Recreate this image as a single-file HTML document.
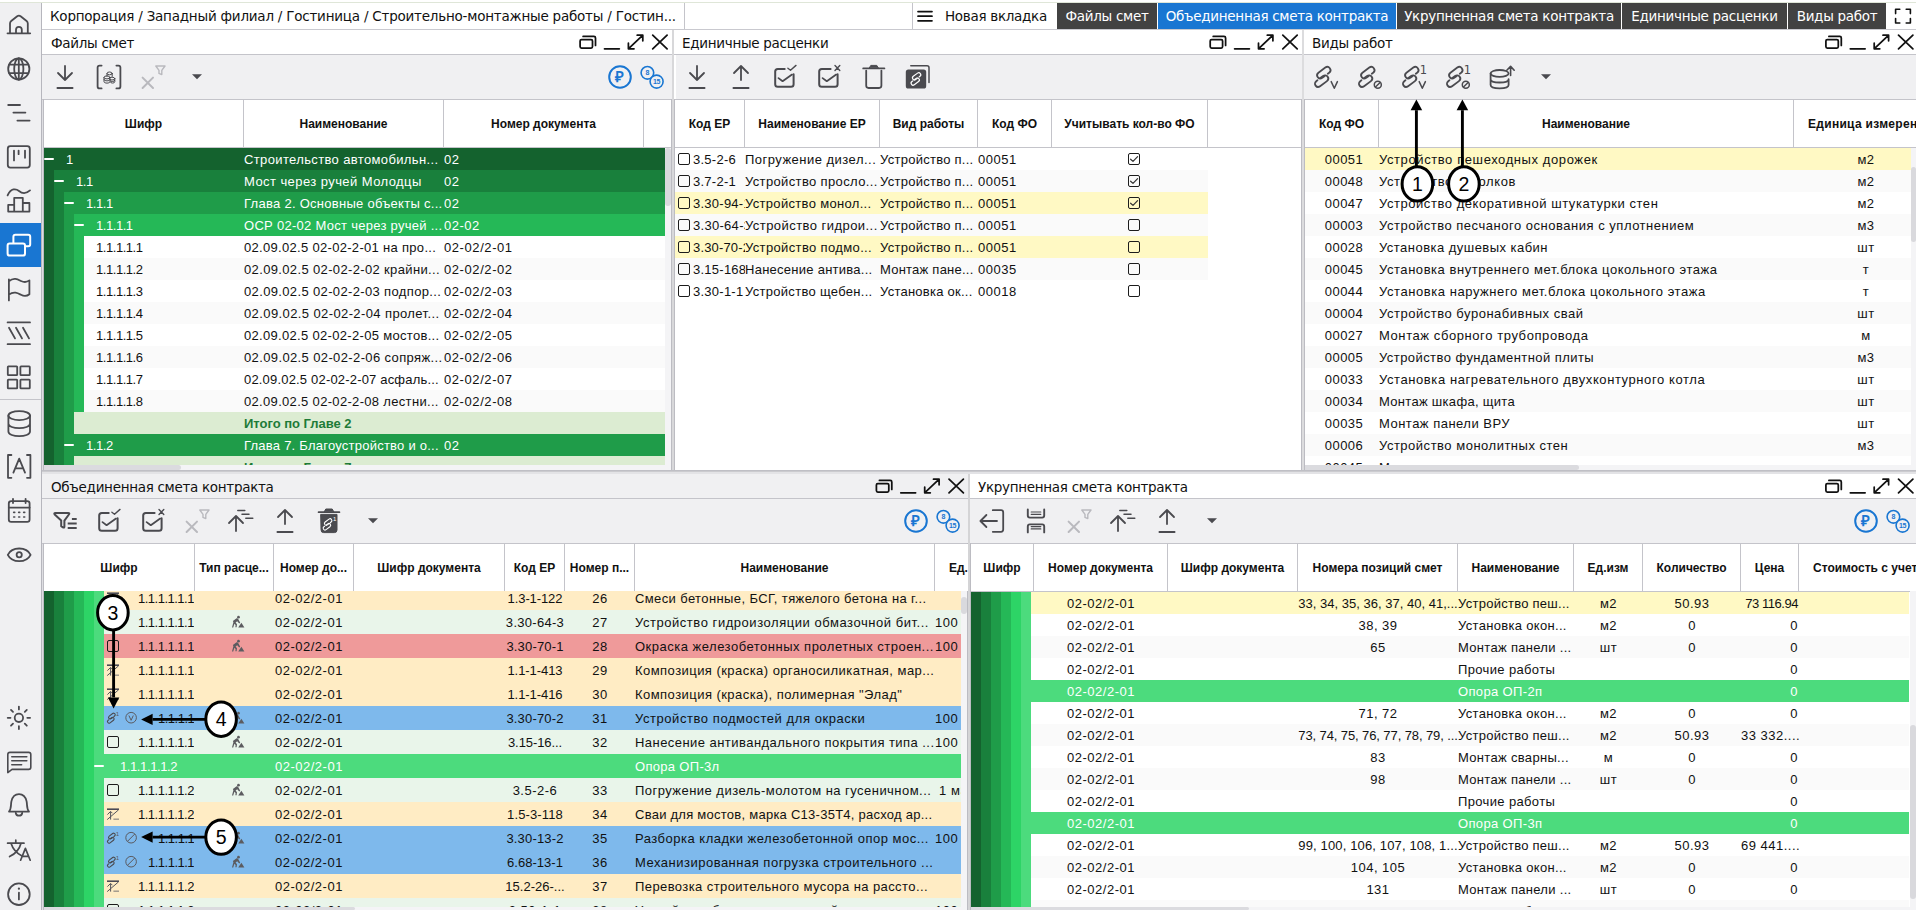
<!DOCTYPE html><html lang="ru"><head><meta charset="utf-8"><title>Объединенная смета контракта</title><style>
*{box-sizing:border-box;margin:0;padding:0}
html,body{width:1916px;height:910px;overflow:hidden;background:#f0f0f2}
body{position:relative;font-family:"Liberation Sans",sans-serif;font-size:14px;color:#111}
.a{position:absolute}
.dj{position:absolute;font-family:"DejaVu Sans","Liberation Sans",sans-serif;font-size:13.5px;letter-spacing:-0.3px;white-space:nowrap;color:#111;line-height:16px}
.th{position:absolute;border-right:1px solid #c4c4ca;font-weight:bold;font-size:12px;text-align:center;white-space:nowrap;overflow:hidden;text-overflow:ellipsis;color:#111;background:#fff}
.rows{position:absolute;overflow:hidden}
.row{position:absolute;left:0}
.c{position:absolute;top:0;height:100%;white-space:nowrap;overflow:hidden;text-overflow:clip;font-size:13px;letter-spacing:0.5px;color:#111}
.clip{text-overflow:clip}
.ctr{text-align:center}
.rgt{text-align:right}
.wt{color:#fff}
.cb{position:absolute;width:12px;height:12px;border:1.5px solid #1c1c1c;border-radius:2px}
svg{position:absolute;left:0;top:0;overflow:visible;pointer-events:none}
.i{fill:none;stroke:#4a4a4f;stroke-width:1.8;stroke-linecap:round;stroke-linejoin:round}
.k{fill:none;stroke:#111;stroke-width:1.75;stroke-linecap:round;stroke-linejoin:round}
svg text{font-family:"Liberation Sans",sans-serif}
</style></head><body><div class="a" style="left:0px;top:3px;width:42px;height:907px;background:#f0f0f2;border-right:1px solid #b6b6bd"></div>
<div class="a" style="left:0px;top:223px;width:41px;height:44px;background:#1976d2"></div>
<div class="a" style="left:0px;top:399px;width:41px;height:1px;background:#c4c4ca"></div>
<div class="a" style="left:0px;top:0px;width:1916px;height:2px;background:#fff"></div>
<div class="a" style="left:0px;top:2px;width:1916px;height:1px;background:#dfe6d8"></div>
<div class="a" style="left:42px;top:3px;width:1874px;height:27px;background:#fff;border-bottom:1px solid #c9c9cf"></div>
<div class="a" style="left:684px;top:3px;width:1px;height:26px;background:#c4c4ca"></div>
<div class="a" style="left:912px;top:3px;width:1px;height:26px;background:#c4c4ca"></div>
<div class="dj" style="left:50px;top:8px;letter-spacing:-0.225px">Корпорация / Западный филиал / Гостиница / Строительно-монтажные работы / Гостин...</div>
<div class="dj" style="left:945px;top:8px">Новая вкладка</div>
<div class="dj" style="left:1057px;top:3px;width:100px;height:26px;line-height:26px;background:#424242;color:#fff;text-align:center">Файлы смет</div>
<div class="dj" style="left:1158px;top:3px;width:238px;height:26px;line-height:26px;background:#1976d2;color:#fff;text-align:center">Объединенная смета контракта</div>
<div class="dj" style="left:1397px;top:3px;width:224px;height:26px;line-height:26px;background:#424242;color:#fff;text-align:center">Укрупненная смета контракта</div>
<div class="dj" style="left:1622px;top:3px;width:165px;height:26px;line-height:26px;background:#424242;color:#fff;text-align:center">Единичные расценки</div>
<div class="dj" style="left:1788px;top:3px;width:98px;height:26px;line-height:26px;background:#424242;color:#fff;text-align:center">Виды работ</div>
<div class="a" style="left:42px;top:470px;width:1874px;height:1px;background:#bfbfc5"></div>
<div class="a" style="left:42px;top:471px;width:1874px;height:1px;background:#cbcbcf"></div>
<div class="a" style="left:42px;top:472px;width:1874px;height:2px;background:#e3e3e6"></div>
<div class="a" style="left:42px;top:30px;width:630px;height:440px;background:#fff"></div>
<div class="a" style="left:42px;top:54px;width:630px;height:1px;background:#c4c4ca"></div>
<div class="dj" style="left:51px;top:35px">Файлы смет</div>
<div class="a" style="left:42px;top:55px;width:630px;height:44px;background:#f0f0f2"></div>
<div class="a" style="left:42px;top:99px;width:630px;height:1px;background:#c4c4ca"></div>
<div class="a" style="left:42px;top:147px;width:630px;height:1px;background:#c4c4ca"></div>
<div class="a" style="left:43px;top:99px;width:1px;height:371px;background:#bcbcc2"></div>
<div class="a" style="left:42px;top:100px;width:1px;height:370px;background:#dedee2"></div>
<div class="a" style="left:671px;top:99px;width:1px;height:371px;background:#bcbcc2"></div>
<div class="a" style="left:674px;top:30px;width:628px;height:440px;background:#fff"></div>
<div class="a" style="left:674px;top:54px;width:628px;height:1px;background:#c4c4ca"></div>
<div class="dj" style="left:682px;top:35px">Единичные расценки</div>
<div class="a" style="left:676px;top:55px;width:626px;height:44px;background:#f0f0f2"></div>
<div class="a" style="left:674px;top:99px;width:628px;height:1px;background:#c4c4ca"></div>
<div class="a" style="left:674px;top:147px;width:628px;height:1px;background:#c4c4ca"></div>
<div class="a" style="left:674px;top:99px;width:1px;height:371px;background:#bcbcc2"></div>
<div class="a" style="left:1301px;top:99px;width:1px;height:371px;background:#bcbcc2"></div>
<div class="a" style="left:1304px;top:30px;width:612px;height:440px;background:#fff"></div>
<div class="a" style="left:1304px;top:54px;width:612px;height:1px;background:#c4c4ca"></div>
<div class="dj" style="left:1312px;top:35px">Виды работ</div>
<div class="a" style="left:1304px;top:55px;width:612px;height:44px;background:#f0f0f2"></div>
<div class="a" style="left:1304px;top:99px;width:612px;height:1px;background:#c4c4ca"></div>
<div class="a" style="left:1304px;top:147px;width:612px;height:1px;background:#c4c4ca"></div>
<div class="a" style="left:1304px;top:99px;width:1px;height:371px;background:#bcbcc2"></div>
<div class="a" style="left:42px;top:474px;width:926px;height:436px;background:#fff"></div>
<div class="a" style="left:42px;top:474px;width:926px;height:24px;background:#f0f0f2"></div>
<div class="a" style="left:42px;top:498px;width:926px;height:1px;background:#c4c4ca"></div>
<div class="dj" style="left:51px;top:479px">Объединенная смета контракта</div>
<div class="a" style="left:42px;top:499px;width:926px;height:44px;background:#f0f0f2"></div>
<div class="a" style="left:42px;top:543px;width:926px;height:1px;background:#c4c4ca"></div>
<div class="a" style="left:42px;top:591px;width:926px;height:1px;background:#c4c4ca"></div>
<div class="a" style="left:43px;top:543px;width:1px;height:367px;background:#bcbcc2"></div>
<div class="a" style="left:42px;top:544px;width:1px;height:366px;background:#dedee2"></div>
<div class="a" style="left:967px;top:543px;width:1px;height:367px;background:#bcbcc2"></div>
<div class="a" style="left:970px;top:474px;width:946px;height:436px;background:#fff"></div>
<div class="a" style="left:970px;top:498px;width:946px;height:1px;background:#c4c4ca"></div>
<div class="dj" style="left:978px;top:479px">Укрупненная смета контракта</div>
<div class="a" style="left:970px;top:499px;width:946px;height:44px;background:#f0f0f2"></div>
<div class="a" style="left:970px;top:543px;width:946px;height:1px;background:#c4c4ca"></div>
<div class="a" style="left:970px;top:591px;width:946px;height:1px;background:#c4c4ca"></div>
<div class="a" style="left:970px;top:543px;width:1px;height:367px;background:#bcbcc2"></div>
<div class="a" style="left:672px;top:30px;width:2px;height:440px;background:#d8d8da"></div>
<div class="a" style="left:1302px;top:30px;width:2px;height:440px;background:#dcdcde"></div>
<div class="a" style="left:968px;top:474px;width:2px;height:436px;background:#d4d4d6"></div>
<div class="th" style="left:44px;top:100px;width:200px;height:47px;line-height:49px;">Шифр</div>
<div class="th" style="left:244px;top:100px;width:200px;height:47px;line-height:49px;">Наименование</div>
<div class="th" style="left:444px;top:100px;width:200px;height:47px;line-height:49px;">Номер документа</div>
<div class="rows" style="left:44px;top:148px;width:621px;height:317px"><div class="row" style="top:0px;width:621px;height:22px;line-height:24px;"><div class="a" style="left:0px;top:0;width:621px;height:22px;background:#14622e"></div><div class="a" style="left:0.3px;top:9.6px;width:10.2px;height:2px;background:#fff;border-radius:1px"></div><div class="c wt clip" style="left:22px;width:178px;letter-spacing:-0.45px;">1</div><div class="c wt" style="left:200px;width:200px;letter-spacing:0.363px;">Строительство автомобильн...</div><div class="c wt" style="left:400px;width:200px;">02</div></div><div class="row" style="top:22px;width:621px;height:22px;line-height:24px;"><div class="a" style="left:0px;top:0;width:10px;height:22px;background:#14622e"></div><div class="a" style="left:10px;top:0;width:611px;height:22px;background:#19803c"></div><div class="a" style="left:10.3px;top:9.6px;width:10.2px;height:2px;background:#fff;border-radius:1px"></div><div class="c wt clip" style="left:32px;width:168px;letter-spacing:-0.45px;">1.1</div><div class="c wt" style="left:200px;width:200px;letter-spacing:0.427px;">Мост через ручей Молодцы</div><div class="c wt" style="left:400px;width:200px;">02</div></div><div class="row" style="top:44px;width:621px;height:22px;line-height:24px;"><div class="a" style="left:0px;top:0;width:10px;height:22px;background:#14622e"></div><div class="a" style="left:10px;top:0;width:10px;height:22px;background:#19803c"></div><div class="a" style="left:20px;top:0;width:601px;height:22px;background:#1f9c49"></div><div class="a" style="left:20.3px;top:9.6px;width:10.2px;height:2px;background:#fff;border-radius:1px"></div><div class="c wt clip" style="left:42px;width:158px;letter-spacing:-0.45px;">1.1.1</div><div class="c wt" style="left:200px;width:200px;letter-spacing:0.275px;">Глава 2. Основные объекты с...</div><div class="c wt" style="left:400px;width:200px;">02</div></div><div class="row" style="top:66px;width:621px;height:22px;line-height:24px;"><div class="a" style="left:0px;top:0;width:10px;height:22px;background:#14622e"></div><div class="a" style="left:10px;top:0;width:10px;height:22px;background:#19803c"></div><div class="a" style="left:20px;top:0;width:10px;height:22px;background:#1f9c49"></div><div class="a" style="left:30px;top:0;width:591px;height:22px;background:#25b857"></div><div class="a" style="left:30.3px;top:9.6px;width:10.2px;height:2px;background:#fff;border-radius:1px"></div><div class="c wt clip" style="left:52px;width:148px;letter-spacing:-0.45px;">1.1.1.1</div><div class="c wt" style="left:200px;width:200px;letter-spacing:0.281px;">ОСР 02-02 Мост через ручей ...</div><div class="c wt" style="left:400px;width:200px;">02-02</div></div><div class="row" style="top:88px;width:621px;height:22px;line-height:24px;"><div class="a" style="left:0px;top:0;width:10px;height:22px;background:#14622e"></div><div class="a" style="left:10px;top:0;width:10px;height:22px;background:#19803c"></div><div class="a" style="left:20px;top:0;width:10px;height:22px;background:#1f9c49"></div><div class="a" style="left:30px;top:0;width:10px;height:22px;background:#25b857"></div><div class="a" style="left:40px;top:0;width:581px;height:22px;background:#fff"></div><div class="c clip" style="left:52px;width:148px;letter-spacing:-0.45px;">1.1.1.1.1</div><div class="c " style="left:200px;width:200px;letter-spacing:0.307px;">02.09.02.5 02-02-2-01 на про...</div><div class="c " style="left:400px;width:200px;letter-spacing:0.579px;">02-02/2-01</div></div><div class="row" style="top:110px;width:621px;height:22px;line-height:24px;"><div class="a" style="left:0px;top:0;width:10px;height:22px;background:#14622e"></div><div class="a" style="left:10px;top:0;width:10px;height:22px;background:#19803c"></div><div class="a" style="left:20px;top:0;width:10px;height:22px;background:#1f9c49"></div><div class="a" style="left:30px;top:0;width:10px;height:22px;background:#25b857"></div><div class="a" style="left:40px;top:0;width:581px;height:22px;background:#fafafa"></div><div class="c clip" style="left:52px;width:148px;letter-spacing:-0.45px;">1.1.1.1.2</div><div class="c " style="left:200px;width:200px;letter-spacing:0.355px;">02.09.02.5 02-02-2-02 крайни...</div><div class="c " style="left:400px;width:200px;letter-spacing:0.579px;">02-02/2-02</div></div><div class="row" style="top:132px;width:621px;height:22px;line-height:24px;"><div class="a" style="left:0px;top:0;width:10px;height:22px;background:#14622e"></div><div class="a" style="left:10px;top:0;width:10px;height:22px;background:#19803c"></div><div class="a" style="left:20px;top:0;width:10px;height:22px;background:#1f9c49"></div><div class="a" style="left:30px;top:0;width:10px;height:22px;background:#25b857"></div><div class="a" style="left:40px;top:0;width:581px;height:22px;background:#fff"></div><div class="c clip" style="left:52px;width:148px;letter-spacing:-0.45px;">1.1.1.1.3</div><div class="c " style="left:200px;width:200px;letter-spacing:0.357px;">02.09.02.5 02-02-2-03 подпор...</div><div class="c " style="left:400px;width:200px;letter-spacing:0.579px;">02-02/2-03</div></div><div class="row" style="top:154px;width:621px;height:22px;line-height:24px;"><div class="a" style="left:0px;top:0;width:10px;height:22px;background:#14622e"></div><div class="a" style="left:10px;top:0;width:10px;height:22px;background:#19803c"></div><div class="a" style="left:20px;top:0;width:10px;height:22px;background:#1f9c49"></div><div class="a" style="left:30px;top:0;width:10px;height:22px;background:#25b857"></div><div class="a" style="left:40px;top:0;width:581px;height:22px;background:#fafafa"></div><div class="c clip" style="left:52px;width:148px;letter-spacing:-0.45px;">1.1.1.1.4</div><div class="c " style="left:200px;width:200px;letter-spacing:0.395px;">02.09.02.5 02-02-2-04 пролет...</div><div class="c " style="left:400px;width:200px;letter-spacing:0.579px;">02-02/2-04</div></div><div class="row" style="top:176px;width:621px;height:22px;line-height:24px;"><div class="a" style="left:0px;top:0;width:10px;height:22px;background:#14622e"></div><div class="a" style="left:10px;top:0;width:10px;height:22px;background:#19803c"></div><div class="a" style="left:20px;top:0;width:10px;height:22px;background:#1f9c49"></div><div class="a" style="left:30px;top:0;width:10px;height:22px;background:#25b857"></div><div class="a" style="left:40px;top:0;width:581px;height:22px;background:#fff"></div><div class="c clip" style="left:52px;width:148px;letter-spacing:-0.45px;">1.1.1.1.5</div><div class="c " style="left:200px;width:200px;letter-spacing:0.314px;">02.09.02.5 02-02-2-05 мостов...</div><div class="c " style="left:400px;width:200px;letter-spacing:0.579px;">02-02/2-05</div></div><div class="row" style="top:198px;width:621px;height:22px;line-height:24px;"><div class="a" style="left:0px;top:0;width:10px;height:22px;background:#14622e"></div><div class="a" style="left:10px;top:0;width:10px;height:22px;background:#19803c"></div><div class="a" style="left:20px;top:0;width:10px;height:22px;background:#1f9c49"></div><div class="a" style="left:30px;top:0;width:10px;height:22px;background:#25b857"></div><div class="a" style="left:40px;top:0;width:581px;height:22px;background:#fafafa"></div><div class="c clip" style="left:52px;width:148px;letter-spacing:-0.45px;">1.1.1.1.6</div><div class="c " style="left:200px;width:200px;letter-spacing:0.377px;">02.09.02.5 02-02-2-06 сопряж...</div><div class="c " style="left:400px;width:200px;letter-spacing:0.579px;">02-02/2-06</div></div><div class="row" style="top:220px;width:621px;height:22px;line-height:24px;"><div class="a" style="left:0px;top:0;width:10px;height:22px;background:#14622e"></div><div class="a" style="left:10px;top:0;width:10px;height:22px;background:#19803c"></div><div class="a" style="left:20px;top:0;width:10px;height:22px;background:#1f9c49"></div><div class="a" style="left:30px;top:0;width:10px;height:22px;background:#25b857"></div><div class="a" style="left:40px;top:0;width:581px;height:22px;background:#fff"></div><div class="c clip" style="left:52px;width:148px;letter-spacing:-0.45px;">1.1.1.1.7</div><div class="c " style="left:200px;width:200px;letter-spacing:0.182px;">02.09.02.5 02-02-2-07 асфаль...</div><div class="c " style="left:400px;width:200px;letter-spacing:0.579px;">02-02/2-07</div></div><div class="row" style="top:242px;width:621px;height:22px;line-height:24px;"><div class="a" style="left:0px;top:0;width:10px;height:22px;background:#14622e"></div><div class="a" style="left:10px;top:0;width:10px;height:22px;background:#19803c"></div><div class="a" style="left:20px;top:0;width:10px;height:22px;background:#1f9c49"></div><div class="a" style="left:30px;top:0;width:10px;height:22px;background:#25b857"></div><div class="a" style="left:40px;top:0;width:581px;height:22px;background:#fafafa"></div><div class="c clip" style="left:52px;width:148px;letter-spacing:-0.45px;">1.1.1.1.8</div><div class="c " style="left:200px;width:200px;letter-spacing:0.321px;">02.09.02.5 02-02-2-08 лестни...</div><div class="c " style="left:400px;width:200px;letter-spacing:0.579px;">02-02/2-08</div></div><div class="row" style="top:264px;width:621px;height:22px;line-height:24px;"><div class="a" style="left:0px;top:0;width:10px;height:22px;background:#14622e"></div><div class="a" style="left:10px;top:0;width:10px;height:22px;background:#19803c"></div><div class="a" style="left:20px;top:0;width:10px;height:22px;background:#1f9c49"></div><div class="a" style="left:30px;top:0;width:591px;height:22px;background:#dcecd2"></div><div class="c " style="left:200px;width:200px;color:#1e7b38;font-weight:bold;letter-spacing:-0.019px;">Итого по Главе 2</div></div><div class="row" style="top:286px;width:621px;height:22px;line-height:24px;"><div class="a" style="left:0px;top:0;width:10px;height:22px;background:#14622e"></div><div class="a" style="left:10px;top:0;width:10px;height:22px;background:#19803c"></div><div class="a" style="left:20px;top:0;width:601px;height:22px;background:#1f9c49"></div><div class="a" style="left:20.3px;top:9.6px;width:10.2px;height:2px;background:#fff;border-radius:1px"></div><div class="c wt clip" style="left:42px;width:158px;letter-spacing:-0.45px;">1.1.2</div><div class="c wt" style="left:200px;width:200px;letter-spacing:0.236px;">Глава 7. Благоустройство и о...</div><div class="c wt" style="left:400px;width:200px;">02</div></div><div class="row" style="top:308px;width:621px;height:22px;line-height:24px;"><div class="a" style="left:0px;top:0;width:10px;height:22px;background:#14622e"></div><div class="a" style="left:10px;top:0;width:10px;height:22px;background:#19803c"></div><div class="a" style="left:20px;top:0;width:10px;height:22px;background:#1f9c49"></div><div class="a" style="left:30px;top:0;width:591px;height:22px;background:#dcecd2"></div><div class="c " style="left:200px;width:200px;color:#1e7b38;font-weight:bold;letter-spacing:-0.019px;">Итого по Главе 7</div></div></div>
<div class="a" style="left:665px;top:148px;width:6px;height:317px;background:#fff"></div>
<div class="a" style="left:665px;top:148px;width:6px;height:317px;background:#f4f4f6"></div>
<div class="a" style="left:665px;top:148px;width:6px;height:58px;background:#d9d9dd;border-radius:3px"></div>
<div class="a" style="left:44px;top:465px;width:627px;height:5px;background:#f4f4f6"></div>
<div class="a" style="left:44px;top:465px;width:137px;height:5px;background:#dbdbdf;border-radius:0 3px 3px 0"></div>
<div class="th" style="left:675px;top:100px;width:70px;height:47px;line-height:49px;">Код ЕР</div>
<div class="th" style="left:745px;top:100px;width:135px;height:47px;line-height:49px;">Наименование ЕР</div>
<div class="th" style="left:880px;top:100px;width:98px;height:47px;line-height:49px;">Вид работы</div>
<div class="th" style="left:978px;top:100px;width:74px;height:47px;line-height:49px;">Код ФО</div>
<div class="th" style="left:1052px;top:100px;width:156px;height:47px;line-height:49px;">Учитывать кол-во ФО</div>
<div class="rows" style="left:675px;top:148px;width:533px;height:154px"><div class="row" style="top:0px;width:533px;height:22px;line-height:24px;background:#fff"><div class="cb" style="left:3px;top:5px"></div><div class="c clip" style="left:18px;width:52px;letter-spacing:0.25px;">3.5-2-6</div><div class="c " style="left:70px;width:135px;letter-spacing:0.478px;">Погружение дизел...</div><div class="c " style="left:205px;width:98px;letter-spacing:0.266px;">Устройство п...</div><div class="c " style="left:303px;width:74px;">00051</div><div class="cb" style="left:453px;top:5px"><svg width="12" height="12" viewBox="0 0 12 12" style="left:-1.4px;top:-1.4px"><path d="M2.6 6.2L5 8.4L9.6 3.6" fill="none" stroke="#333" stroke-width="1.2" stroke-linecap="round" stroke-linejoin="round"/></svg></div></div><div class="row" style="top:22px;width:533px;height:22px;line-height:24px;background:#fafafa"><div class="cb" style="left:3px;top:5px"></div><div class="c clip" style="left:18px;width:52px;letter-spacing:0.25px;">3.7-2-1</div><div class="c " style="left:70px;width:135px;letter-spacing:0.363px;">Устройство просло...</div><div class="c " style="left:205px;width:98px;letter-spacing:0.266px;">Устройство п...</div><div class="c " style="left:303px;width:74px;">00051</div><div class="cb" style="left:453px;top:5px"><svg width="12" height="12" viewBox="0 0 12 12" style="left:-1.4px;top:-1.4px"><path d="M2.6 6.2L5 8.4L9.6 3.6" fill="none" stroke="#333" stroke-width="1.2" stroke-linecap="round" stroke-linejoin="round"/></svg></div></div><div class="row" style="top:44px;width:533px;height:22px;line-height:24px;background:#fff9c4"><div class="cb" style="left:3px;top:5px"></div><div class="c clip" style="left:18px;width:52px;letter-spacing:0.25px;">3.30-94-1</div><div class="c " style="left:70px;width:135px;letter-spacing:0.324px;">Устройство монол...</div><div class="c " style="left:205px;width:98px;letter-spacing:0.266px;">Устройство п...</div><div class="c " style="left:303px;width:74px;">00051</div><div class="cb" style="left:453px;top:5px"><svg width="12" height="12" viewBox="0 0 12 12" style="left:-1.4px;top:-1.4px"><path d="M2.6 6.2L5 8.4L9.6 3.6" fill="none" stroke="#333" stroke-width="1.2" stroke-linecap="round" stroke-linejoin="round"/></svg></div></div><div class="row" style="top:66px;width:533px;height:22px;line-height:24px;background:#fafafa"><div class="cb" style="left:3px;top:5px"></div><div class="c clip" style="left:18px;width:52px;letter-spacing:0.25px;letter-spacing:0.292px;">3.30-64-3</div><div class="c " style="left:70px;width:135px;letter-spacing:0.446px;">Устройство гидрои...</div><div class="c " style="left:205px;width:98px;letter-spacing:0.266px;">Устройство п...</div><div class="c " style="left:303px;width:74px;">00051</div><div class="cb" style="left:453px;top:5px"></div></div><div class="row" style="top:88px;width:533px;height:22px;line-height:24px;background:#fff9c4"><div class="cb" style="left:3px;top:5px"></div><div class="c clip" style="left:18px;width:52px;letter-spacing:0.25px;letter-spacing:0.159px;">3.30-70-2</div><div class="c " style="left:70px;width:135px;letter-spacing:0.362px;">Устройство подмо...</div><div class="c " style="left:205px;width:98px;letter-spacing:0.266px;">Устройство п...</div><div class="c " style="left:303px;width:74px;">00051</div><div class="cb" style="left:453px;top:5px"></div></div><div class="row" style="top:110px;width:533px;height:22px;line-height:24px;background:#fafafa"><div class="cb" style="left:3px;top:5px"></div><div class="c clip" style="left:18px;width:52px;letter-spacing:0.25px;">3.15-168-1</div><div class="c " style="left:70px;width:135px;letter-spacing:0.263px;">Нанесение антива...</div><div class="c " style="left:205px;width:98px;letter-spacing:0.232px;">Монтаж пане...</div><div class="c " style="left:303px;width:74px;">00035</div><div class="cb" style="left:453px;top:5px"></div></div><div class="row" style="top:132px;width:533px;height:22px;line-height:24px;background:#fff"><div class="cb" style="left:3px;top:5px"></div><div class="c clip" style="left:18px;width:52px;letter-spacing:0.25px;">3.30-1-1</div><div class="c " style="left:70px;width:135px;letter-spacing:0.298px;">Устройство щебен...</div><div class="c " style="left:205px;width:98px;letter-spacing:0.246px;">Установка ок...</div><div class="c " style="left:303px;width:74px;">00018</div><div class="cb" style="left:453px;top:5px"></div></div></div>
<div class="th" style="left:1305px;top:100px;width:74px;height:47px;line-height:49px;">Код ФО</div>
<div class="th" style="left:1379px;top:100px;width:415px;height:47px;line-height:49px;">Наименование</div>
<div class="th" style="left:1794px;top:100px;width:144px;height:47px;line-height:49px;border-right:none;text-overflow:clip;letter-spacing:0.3px;text-align:left;padding-left:14px">Единица измерения</div>
<div class="rows" style="left:1305px;top:148px;width:606px;height:317px"><div class="row" style="top:0px;width:606px;height:22px;line-height:24px;background:#fff9c4"><div class="c ctr" style="left:0px;width:78px;">00051</div><div class="c " style="left:74px;width:415px;letter-spacing:0.594px;">Устройство пешеходных дорожек</div><div class="c ctr" style="left:489px;width:144px;">м2</div></div><div class="row" style="top:22px;width:606px;height:22px;line-height:24px;background:#fafafa"><div class="c ctr" style="left:0px;width:78px;">00048</div><div class="c " style="left:74px;width:415px;letter-spacing:0.581px;">Устройство потолков</div><div class="c ctr" style="left:489px;width:144px;">м2</div></div><div class="row" style="top:44px;width:606px;height:22px;line-height:24px;background:#fff"><div class="c ctr" style="left:0px;width:78px;">00047</div><div class="c " style="left:74px;width:415px;letter-spacing:0.548px;">Устройство декоративной штукатурки стен</div><div class="c ctr" style="left:489px;width:144px;">м2</div></div><div class="row" style="top:66px;width:606px;height:22px;line-height:24px;background:#fafafa"><div class="c ctr" style="left:0px;width:78px;">00003</div><div class="c " style="left:74px;width:415px;letter-spacing:0.516px;">Устройство песчаного основания с уплотнением</div><div class="c ctr" style="left:489px;width:144px;">м3</div></div><div class="row" style="top:88px;width:606px;height:22px;line-height:24px;background:#fff"><div class="c ctr" style="left:0px;width:78px;">00028</div><div class="c " style="left:74px;width:415px;letter-spacing:0.467px;">Установка душевых кабин</div><div class="c ctr" style="left:489px;width:144px;">шт</div></div><div class="row" style="top:110px;width:606px;height:22px;line-height:24px;background:#fafafa"><div class="c ctr" style="left:0px;width:78px;">00045</div><div class="c " style="left:74px;width:415px;letter-spacing:0.551px;">Установка внутреннего мет.блока цокольного этажа</div><div class="c ctr" style="left:489px;width:144px;">т</div></div><div class="row" style="top:132px;width:606px;height:22px;line-height:24px;background:#fff"><div class="c ctr" style="left:0px;width:78px;">00044</div><div class="c " style="left:74px;width:415px;letter-spacing:0.565px;">Установка наружнего мет.блока цокольного этажа</div><div class="c ctr" style="left:489px;width:144px;">т</div></div><div class="row" style="top:154px;width:606px;height:22px;line-height:24px;background:#fafafa"><div class="c ctr" style="left:0px;width:78px;">00004</div><div class="c " style="left:74px;width:415px;letter-spacing:0.519px;">Устройство буронабивных свай</div><div class="c ctr" style="left:489px;width:144px;">шт</div></div><div class="row" style="top:176px;width:606px;height:22px;line-height:24px;background:#fff"><div class="c ctr" style="left:0px;width:78px;">00027</div><div class="c " style="left:74px;width:415px;letter-spacing:0.583px;">Монтаж сборного трубопровода</div><div class="c ctr" style="left:489px;width:144px;">м</div></div><div class="row" style="top:198px;width:606px;height:22px;line-height:24px;background:#fafafa"><div class="c ctr" style="left:0px;width:78px;">00005</div><div class="c " style="left:74px;width:415px;letter-spacing:0.436px;">Устройство фундаментной плиты</div><div class="c ctr" style="left:489px;width:144px;">м3</div></div><div class="row" style="top:220px;width:606px;height:22px;line-height:24px;background:#fff"><div class="c ctr" style="left:0px;width:78px;">00033</div><div class="c " style="left:74px;width:415px;letter-spacing:0.588px;">Установка нагревательного двухконтурного котла</div><div class="c ctr" style="left:489px;width:144px;">шт</div></div><div class="row" style="top:242px;width:606px;height:22px;line-height:24px;background:#fafafa"><div class="c ctr" style="left:0px;width:78px;">00034</div><div class="c " style="left:74px;width:415px;letter-spacing:0.304px;">Монтаж шкафа, щита</div><div class="c ctr" style="left:489px;width:144px;">шт</div></div><div class="row" style="top:264px;width:606px;height:22px;line-height:24px;background:#fff"><div class="c ctr" style="left:0px;width:78px;">00035</div><div class="c " style="left:74px;width:415px;letter-spacing:0.490px;">Монтаж панели ВРУ</div><div class="c ctr" style="left:489px;width:144px;">шт</div></div><div class="row" style="top:286px;width:606px;height:22px;line-height:24px;background:#fafafa"><div class="c ctr" style="left:0px;width:78px;">00006</div><div class="c " style="left:74px;width:415px;letter-spacing:0.509px;">Устройство монолитных стен</div><div class="c ctr" style="left:489px;width:144px;">м3</div></div><div class="row" style="top:308px;width:606px;height:22px;line-height:24px;background:#fff"><div class="c ctr" style="left:0px;width:78px;">00045</div><div class="c " style="left:74px;width:415px;">Монтаж</div><div class="c ctr" style="left:489px;width:144px;">т</div></div></div>
<div class="a" style="left:1911px;top:148px;width:5px;height:317px;background:#f4f4f6"></div>
<div class="a" style="left:1911px;top:167px;width:5px;height:75px;background:#d9d9dd;border-radius:3px"></div>
<div class="a" style="left:1305px;top:465px;width:611px;height:5px;background:#f4f4f6"></div>
<div class="a" style="left:1305px;top:465px;width:274px;height:5px;background:#dbdbdf;border-radius:0 3px 3px 0"></div>
<div class="th" style="left:44px;top:544px;width:151px;height:47px;line-height:49px;">Шифр</div>
<div class="th" style="left:195px;top:544px;width:79px;height:47px;line-height:49px;">Тип расце...</div>
<div class="th" style="left:274px;top:544px;width:80px;height:47px;line-height:49px;">Номер до...</div>
<div class="th" style="left:354px;top:544px;width:151px;height:47px;line-height:49px;">Шифр документа</div>
<div class="th" style="left:505px;top:544px;width:60px;height:47px;line-height:49px;">Код ЕР</div>
<div class="th" style="left:565px;top:544px;width:70px;height:47px;line-height:49px;">Номер п...</div>
<div class="th" style="left:635px;top:544px;width:300px;height:47px;line-height:49px;">Наименование</div>
<div class="th" style="left:935px;top:544px;width:33px;height:47px;line-height:49px;border-right:none;text-overflow:clip;text-align:left;padding-left:14px">Ед.изм</div>
<div class="rows" style="left:44px;top:591px;width:917px;height:316px"><div class="row" style="top:-5px;width:917px;height:24px;line-height:26px"><div class="a" style="left:0px;top:0;width:10px;height:24px;background:#14622e"></div><div class="a" style="left:10px;top:0;width:10px;height:24px;background:#19803c"></div><div class="a" style="left:20px;top:0;width:10px;height:24px;background:#1f9c49"></div><div class="a" style="left:30px;top:0;width:10px;height:24px;background:#25b857"></div><div class="a" style="left:40px;top:0;width:10px;height:24px;background:#2dd466"></div><div class="a" style="left:50px;top:0;width:10px;height:24px;background:#4cdb7d"></div><div class="a" style="left:60px;top:0;width:857px;height:24px;background:#ffecc4"></div><div class="c clip" style="left:94px;width:56px;letter-spacing:-0.5px;">1.1.1.1.1.1</div><div class="c clip" style="left:230px;width:80px;padding-left:1px">02-02/2-01</div><div class="c ctr clip" style="left:461px;width:60px;letter-spacing:-0.097px;">1.3-1-122</div><div class="c ctr" style="left:521px;width:70px;">26</div><div class="c clip" style="left:591px;width:300px;letter-spacing:0.387px;">Смеси бетонные, БСГ, тяжелого бетона на г...</div><div class="c clip" style="left:891px;width:26px;"></div></div><div class="row" style="top:19px;width:917px;height:24px;line-height:26px"><div class="a" style="left:0px;top:0;width:10px;height:24px;background:#14622e"></div><div class="a" style="left:10px;top:0;width:10px;height:24px;background:#19803c"></div><div class="a" style="left:20px;top:0;width:10px;height:24px;background:#1f9c49"></div><div class="a" style="left:30px;top:0;width:10px;height:24px;background:#25b857"></div><div class="a" style="left:40px;top:0;width:10px;height:24px;background:#2dd466"></div><div class="a" style="left:50px;top:0;width:10px;height:24px;background:#4cdb7d"></div><div class="a" style="left:60px;top:0;width:857px;height:24px;background:#e9f5ea"></div><div class="cb" style="left:63px;top:6px"></div><div class="c clip" style="left:94px;width:56px;letter-spacing:-0.5px;">1.1.1.1.1.1</div><div class="c clip" style="left:230px;width:80px;padding-left:1px">02-02/2-01</div><div class="c ctr clip" style="left:461px;width:60px;letter-spacing:0.292px;">3.30-64-3</div><div class="c ctr" style="left:521px;width:70px;">27</div><div class="c clip" style="left:591px;width:300px;letter-spacing:0.544px;">Устройство гидроизоляции обмазочной бит...</div><div class="c clip" style="left:891px;width:26px;">100</div></div><div class="row" style="top:43px;width:917px;height:24px;line-height:26px"><div class="a" style="left:0px;top:0;width:10px;height:24px;background:#14622e"></div><div class="a" style="left:10px;top:0;width:10px;height:24px;background:#19803c"></div><div class="a" style="left:20px;top:0;width:10px;height:24px;background:#1f9c49"></div><div class="a" style="left:30px;top:0;width:10px;height:24px;background:#25b857"></div><div class="a" style="left:40px;top:0;width:10px;height:24px;background:#2dd466"></div><div class="a" style="left:50px;top:0;width:10px;height:24px;background:#4cdb7d"></div><div class="a" style="left:60px;top:0;width:857px;height:24px;background:#ef9a9a"></div><div class="cb" style="left:63px;top:6px"></div><div class="c clip" style="left:94px;width:56px;letter-spacing:-0.5px;">1.1.1.1.1.1</div><div class="c clip" style="left:230px;width:80px;padding-left:1px">02-02/2-01</div><div class="c ctr clip" style="left:461px;width:60px;letter-spacing:0.159px;">3.30-70-1</div><div class="c ctr" style="left:521px;width:70px;">28</div><div class="c clip" style="left:591px;width:300px;">Окраска железобетонных пролетных строен...</div><div class="c clip" style="left:891px;width:26px;">100</div></div><div class="row" style="top:67px;width:917px;height:24px;line-height:26px"><div class="a" style="left:0px;top:0;width:10px;height:24px;background:#14622e"></div><div class="a" style="left:10px;top:0;width:10px;height:24px;background:#19803c"></div><div class="a" style="left:20px;top:0;width:10px;height:24px;background:#1f9c49"></div><div class="a" style="left:30px;top:0;width:10px;height:24px;background:#25b857"></div><div class="a" style="left:40px;top:0;width:10px;height:24px;background:#2dd466"></div><div class="a" style="left:50px;top:0;width:10px;height:24px;background:#4cdb7d"></div><div class="a" style="left:60px;top:0;width:857px;height:24px;background:#ffecc4"></div><div class="c clip" style="left:94px;width:56px;letter-spacing:-0.5px;">1.1.1.1.1.1</div><div class="c clip" style="left:230px;width:80px;padding-left:1px">02-02/2-01</div><div class="c ctr clip" style="left:461px;width:60px;letter-spacing:-0.064px;">1.1-1-413</div><div class="c ctr" style="left:521px;width:70px;">29</div><div class="c clip" style="left:591px;width:300px;letter-spacing:0.453px;">Композиция (краска) органосиликатная, мар...</div><div class="c clip" style="left:891px;width:26px;"></div></div><div class="row" style="top:91px;width:917px;height:24px;line-height:26px"><div class="a" style="left:0px;top:0;width:10px;height:24px;background:#14622e"></div><div class="a" style="left:10px;top:0;width:10px;height:24px;background:#19803c"></div><div class="a" style="left:20px;top:0;width:10px;height:24px;background:#1f9c49"></div><div class="a" style="left:30px;top:0;width:10px;height:24px;background:#25b857"></div><div class="a" style="left:40px;top:0;width:10px;height:24px;background:#2dd466"></div><div class="a" style="left:50px;top:0;width:10px;height:24px;background:#4cdb7d"></div><div class="a" style="left:60px;top:0;width:857px;height:24px;background:#ffecc4"></div><div class="c clip" style="left:94px;width:56px;letter-spacing:-0.5px;">1.1.1.1.1.1</div><div class="c clip" style="left:230px;width:80px;padding-left:1px">02-02/2-01</div><div class="c ctr clip" style="left:461px;width:60px;letter-spacing:-0.064px;">1.1-1-416</div><div class="c ctr" style="left:521px;width:70px;">30</div><div class="c clip" style="left:591px;width:300px;letter-spacing:0.454px;">Композиция (краска), полимерная &quot;Элад&quot;</div><div class="c clip" style="left:891px;width:26px;"></div></div><div class="row" style="top:115px;width:917px;height:24px;line-height:26px"><div class="a" style="left:0px;top:0;width:10px;height:24px;background:#14622e"></div><div class="a" style="left:10px;top:0;width:10px;height:24px;background:#19803c"></div><div class="a" style="left:20px;top:0;width:10px;height:24px;background:#1f9c49"></div><div class="a" style="left:30px;top:0;width:10px;height:24px;background:#25b857"></div><div class="a" style="left:40px;top:0;width:10px;height:24px;background:#2dd466"></div><div class="a" style="left:50px;top:0;width:10px;height:24px;background:#4cdb7d"></div><div class="a" style="left:60px;top:0;width:857px;height:24px;background:#7eb9ec"></div><div class="c clip" style="left:114px;width:36px;letter-spacing:-0.5px;">1.1.1.1.1.1</div><div class="c clip" style="left:230px;width:80px;padding-left:1px">02-02/2-01</div><div class="c ctr clip" style="left:461px;width:60px;letter-spacing:0.159px;">3.30-70-2</div><div class="c ctr" style="left:521px;width:70px;">31</div><div class="c clip" style="left:591px;width:300px;letter-spacing:0.563px;">Устройство подмостей для окраски</div><div class="c clip" style="left:891px;width:26px;">100</div></div><div class="row" style="top:139px;width:917px;height:24px;line-height:26px"><div class="a" style="left:0px;top:0;width:10px;height:24px;background:#14622e"></div><div class="a" style="left:10px;top:0;width:10px;height:24px;background:#19803c"></div><div class="a" style="left:20px;top:0;width:10px;height:24px;background:#1f9c49"></div><div class="a" style="left:30px;top:0;width:10px;height:24px;background:#25b857"></div><div class="a" style="left:40px;top:0;width:10px;height:24px;background:#2dd466"></div><div class="a" style="left:50px;top:0;width:10px;height:24px;background:#4cdb7d"></div><div class="a" style="left:60px;top:0;width:857px;height:24px;background:#e9f5ea"></div><div class="cb" style="left:63px;top:6px"></div><div class="c clip" style="left:94px;width:56px;letter-spacing:-0.5px;">1.1.1.1.1.1</div><div class="c clip" style="left:230px;width:80px;padding-left:1px">02-02/2-01</div><div class="c ctr clip" style="left:461px;width:60px;letter-spacing:-0.084px;">3.15-16...</div><div class="c ctr" style="left:521px;width:70px;">32</div><div class="c clip" style="left:591px;width:300px;letter-spacing:0.452px;">Нанесение антивандального покрытия типа ...</div><div class="c clip" style="left:891px;width:26px;">100</div></div><div class="row" style="top:163px;width:917px;height:24px;line-height:26px"><div class="a" style="left:0px;top:0;width:10px;height:24px;background:#14622e"></div><div class="a" style="left:10px;top:0;width:10px;height:24px;background:#19803c"></div><div class="a" style="left:20px;top:0;width:10px;height:24px;background:#1f9c49"></div><div class="a" style="left:30px;top:0;width:10px;height:24px;background:#25b857"></div><div class="a" style="left:40px;top:0;width:10px;height:24px;background:#2dd466"></div><div class="a" style="left:50px;top:0;width:867px;height:24px;background:#4cdb7d"></div><div class="a" style="left:50.3px;top:10.6px;width:10.2px;height:2px;background:#fff;border-radius:1px"></div><div class="c wt clip" style="left:76px;width:74px;letter-spacing:-0.4px;">1.1.1.1.1.2</div><div class="c wt clip" style="left:230px;width:80px;padding-left:1px">02-02/2-01</div><div class="c wt" style="left:591px;width:300px;letter-spacing:0.312px;">Опора ОП-3л</div></div><div class="row" style="top:187px;width:917px;height:24px;line-height:26px"><div class="a" style="left:0px;top:0;width:10px;height:24px;background:#14622e"></div><div class="a" style="left:10px;top:0;width:10px;height:24px;background:#19803c"></div><div class="a" style="left:20px;top:0;width:10px;height:24px;background:#1f9c49"></div><div class="a" style="left:30px;top:0;width:10px;height:24px;background:#25b857"></div><div class="a" style="left:40px;top:0;width:10px;height:24px;background:#2dd466"></div><div class="a" style="left:50px;top:0;width:10px;height:24px;background:#4cdb7d"></div><div class="a" style="left:60px;top:0;width:857px;height:24px;background:#e9f5ea"></div><div class="cb" style="left:63px;top:6px"></div><div class="c clip" style="left:94px;width:56px;letter-spacing:-0.5px;">1.1.1.1.1.2</div><div class="c clip" style="left:230px;width:80px;padding-left:1px">02-02/2-01</div><div class="c ctr clip" style="left:461px;width:60px;">3.5-2-6</div><div class="c ctr" style="left:521px;width:70px;">33</div><div class="c clip" style="left:591px;width:300px;letter-spacing:0.465px;">Погружение дизель-молотом на гусеничном...</div><div class="c clip" style="left:891px;width:26px;">&nbsp;1 м3</div></div><div class="row" style="top:211px;width:917px;height:24px;line-height:26px"><div class="a" style="left:0px;top:0;width:10px;height:24px;background:#14622e"></div><div class="a" style="left:10px;top:0;width:10px;height:24px;background:#19803c"></div><div class="a" style="left:20px;top:0;width:10px;height:24px;background:#1f9c49"></div><div class="a" style="left:30px;top:0;width:10px;height:24px;background:#25b857"></div><div class="a" style="left:40px;top:0;width:10px;height:24px;background:#2dd466"></div><div class="a" style="left:50px;top:0;width:10px;height:24px;background:#4cdb7d"></div><div class="a" style="left:60px;top:0;width:857px;height:24px;background:#ffecc4"></div><div class="c clip" style="left:94px;width:56px;letter-spacing:-0.5px;">1.1.1.1.1.2</div><div class="c clip" style="left:230px;width:80px;padding-left:1px">02-02/2-01</div><div class="c ctr clip" style="left:461px;width:60px;letter-spacing:0.122px;">1.5-3-118</div><div class="c ctr" style="left:521px;width:70px;">34</div><div class="c clip" style="left:591px;width:300px;letter-spacing:0.254px;">Сваи для мостов, марка С13-35Т4, расход ар...</div><div class="c clip" style="left:891px;width:26px;"></div></div><div class="row" style="top:235px;width:917px;height:24px;line-height:26px"><div class="a" style="left:0px;top:0;width:10px;height:24px;background:#14622e"></div><div class="a" style="left:10px;top:0;width:10px;height:24px;background:#19803c"></div><div class="a" style="left:20px;top:0;width:10px;height:24px;background:#1f9c49"></div><div class="a" style="left:30px;top:0;width:10px;height:24px;background:#25b857"></div><div class="a" style="left:40px;top:0;width:10px;height:24px;background:#2dd466"></div><div class="a" style="left:50px;top:0;width:10px;height:24px;background:#4cdb7d"></div><div class="a" style="left:60px;top:0;width:857px;height:24px;background:#7eb9ec"></div><div class="c clip" style="left:114px;width:36px;letter-spacing:-0.5px;">1.1.1.1.1.2</div><div class="c clip" style="left:230px;width:80px;padding-left:1px">02-02/2-01</div><div class="c ctr clip" style="left:461px;width:60px;letter-spacing:0.159px;">3.30-13-2</div><div class="c ctr" style="left:521px;width:70px;">35</div><div class="c clip" style="left:591px;width:300px;letter-spacing:0.495px;">Разборка кладки железобетонной опор мос...</div><div class="c clip" style="left:891px;width:26px;">100</div></div><div class="row" style="top:259px;width:917px;height:24px;line-height:26px"><div class="a" style="left:0px;top:0;width:10px;height:24px;background:#14622e"></div><div class="a" style="left:10px;top:0;width:10px;height:24px;background:#19803c"></div><div class="a" style="left:20px;top:0;width:10px;height:24px;background:#1f9c49"></div><div class="a" style="left:30px;top:0;width:10px;height:24px;background:#25b857"></div><div class="a" style="left:40px;top:0;width:10px;height:24px;background:#2dd466"></div><div class="a" style="left:50px;top:0;width:10px;height:24px;background:#4cdb7d"></div><div class="a" style="left:60px;top:0;width:857px;height:24px;background:#7eb9ec"></div><div class="c clip" style="left:104px;width:46px;letter-spacing:-0.5px;">1.1.1.1.1.2</div><div class="c clip" style="left:230px;width:80px;padding-left:1px">02-02/2-01</div><div class="c ctr clip" style="left:461px;width:60px;letter-spacing:0.014px;">6.68-13-1</div><div class="c ctr" style="left:521px;width:70px;">36</div><div class="c clip" style="left:591px;width:300px;">Механизированная погрузка строительного ...</div><div class="c clip" style="left:891px;width:26px;"></div></div><div class="row" style="top:283px;width:917px;height:24px;line-height:26px"><div class="a" style="left:0px;top:0;width:10px;height:24px;background:#14622e"></div><div class="a" style="left:10px;top:0;width:10px;height:24px;background:#19803c"></div><div class="a" style="left:20px;top:0;width:10px;height:24px;background:#1f9c49"></div><div class="a" style="left:30px;top:0;width:10px;height:24px;background:#25b857"></div><div class="a" style="left:40px;top:0;width:10px;height:24px;background:#2dd466"></div><div class="a" style="left:50px;top:0;width:10px;height:24px;background:#4cdb7d"></div><div class="a" style="left:60px;top:0;width:857px;height:24px;background:#ffecc4"></div><div class="c clip" style="left:94px;width:56px;letter-spacing:-0.5px;">1.1.1.1.1.2</div><div class="c clip" style="left:230px;width:80px;padding-left:1px">02-02/2-01</div><div class="c ctr clip" style="left:461px;width:60px;letter-spacing:0.012px;">15.2-26-...</div><div class="c ctr" style="left:521px;width:70px;">37</div><div class="c clip" style="left:591px;width:300px;letter-spacing:0.412px;">Перевозка строительного мусора на рассто...</div><div class="c clip" style="left:891px;width:26px;"></div></div><div class="row" style="top:307px;width:917px;height:24px;line-height:26px"><div class="a" style="left:0px;top:0;width:10px;height:24px;background:#14622e"></div><div class="a" style="left:10px;top:0;width:10px;height:24px;background:#19803c"></div><div class="a" style="left:20px;top:0;width:10px;height:24px;background:#1f9c49"></div><div class="a" style="left:30px;top:0;width:10px;height:24px;background:#25b857"></div><div class="a" style="left:40px;top:0;width:10px;height:24px;background:#2dd466"></div><div class="a" style="left:50px;top:0;width:10px;height:24px;background:#4cdb7d"></div><div class="a" style="left:60px;top:0;width:857px;height:24px;background:#e9f5ea"></div><div class="cb" style="left:63px;top:6px"></div><div class="c clip" style="left:94px;width:56px;letter-spacing:-0.5px;">1.1.1.1.1.2</div><div class="c clip" style="left:230px;width:80px;padding-left:1px">02-02/2-01</div><div class="c ctr clip" style="left:461px;width:60px;">3.50-1-1</div><div class="c ctr" style="left:521px;width:70px;">38</div><div class="c clip" style="left:591px;width:300px;">Устройство бетонных покрытий площадок...</div><div class="c clip" style="left:891px;width:26px;">100</div></div></div>
<div class="a" style="left:961px;top:591px;width:6px;height:316px;background:#f4f4f6"></div>
<div class="a" style="left:961px;top:597px;width:6px;height:17px;background:#d9d9dd;border-radius:3px"></div>
<div class="a" style="left:44px;top:907px;width:923px;height:3px;background:#f4f4f6"></div>
<div class="a" style="left:44px;top:907px;width:311px;height:3px;background:#dbdbdf;border-radius:0 3px 3px 0"></div>
<div class="th" style="left:971px;top:544px;width:63px;height:47px;line-height:49px;">Шифр</div>
<div class="th" style="left:1034px;top:544px;width:134px;height:47px;line-height:49px;">Номер документа</div>
<div class="th" style="left:1168px;top:544px;width:130px;height:47px;line-height:49px;">Шифр документа</div>
<div class="th" style="left:1298px;top:544px;width:160px;height:47px;line-height:49px;">Номера позиций смет</div>
<div class="th" style="left:1458px;top:544px;width:116px;height:47px;line-height:49px;">Наименование</div>
<div class="th" style="left:1574px;top:544px;width:69px;height:47px;line-height:49px;">Ед.изм</div>
<div class="th" style="left:1643px;top:544px;width:98px;height:47px;line-height:49px;">Количество</div>
<div class="th" style="left:1741px;top:544px;width:58px;height:47px;line-height:49px;">Цена</div>
<div class="th" style="left:1799px;top:544px;width:117px;height:47px;line-height:49px;border-right:none;text-overflow:clip;text-align:left;padding-left:14px">Стоимость с учетом НДС</div>
<div class="rows" style="left:971px;top:591px;width:938px;height:316px"><div class="row" style="top:1px;width:938px;height:22px;line-height:24px"><div class="a" style="left:0px;top:0;width:10px;height:22px;background:#14622e"></div><div class="a" style="left:10px;top:0;width:10px;height:22px;background:#19803c"></div><div class="a" style="left:20px;top:0;width:10px;height:22px;background:#1f9c49"></div><div class="a" style="left:30px;top:0;width:10px;height:22px;background:#25b857"></div><div class="a" style="left:40px;top:0;width:10px;height:22px;background:#2dd466"></div><div class="a" style="left:50px;top:0;width:10px;height:22px;background:#4cdb7d"></div><div class="a" style="left:60px;top:0;width:878px;height:22px;background:#fff9c4"></div><div class="c ctr" style="left:63px;width:134px;">02-02/2-01</div><div class="c ctr clip" style="left:327px;width:160px;letter-spacing:0.016px;">33, 34, 35, 36, 37, 40, 41,...</div><div class="c clip" style="left:487px;width:116px;letter-spacing:0.266px;">Устройство пеш...</div><div class="c ctr" style="left:603px;width:69px;">м2</div><div class="c ctr" style="left:672px;width:98px;">50.93</div><div class="c rgt clip" style="left:770px;width:58px;padding-right:1px;letter-spacing:-0.45px">73 116.94</div></div><div class="row" style="top:23px;width:938px;height:22px;line-height:24px"><div class="a" style="left:0px;top:0;width:10px;height:22px;background:#14622e"></div><div class="a" style="left:10px;top:0;width:10px;height:22px;background:#19803c"></div><div class="a" style="left:20px;top:0;width:10px;height:22px;background:#1f9c49"></div><div class="a" style="left:30px;top:0;width:10px;height:22px;background:#25b857"></div><div class="a" style="left:40px;top:0;width:10px;height:22px;background:#2dd466"></div><div class="a" style="left:50px;top:0;width:10px;height:22px;background:#4cdb7d"></div><div class="a" style="left:60px;top:0;width:878px;height:22px;background:#fff"></div><div class="c ctr" style="left:63px;width:134px;">02-02/2-01</div><div class="c ctr clip" style="left:327px;width:160px;">38, 39</div><div class="c clip" style="left:487px;width:116px;letter-spacing:0.320px;">Установка окон...</div><div class="c ctr" style="left:603px;width:69px;">м2</div><div class="c ctr" style="left:672px;width:98px;">0</div><div class="c rgt clip" style="left:770px;width:58px;padding-right:1px">0</div></div><div class="row" style="top:45px;width:938px;height:22px;line-height:24px"><div class="a" style="left:0px;top:0;width:10px;height:22px;background:#14622e"></div><div class="a" style="left:10px;top:0;width:10px;height:22px;background:#19803c"></div><div class="a" style="left:20px;top:0;width:10px;height:22px;background:#1f9c49"></div><div class="a" style="left:30px;top:0;width:10px;height:22px;background:#25b857"></div><div class="a" style="left:40px;top:0;width:10px;height:22px;background:#2dd466"></div><div class="a" style="left:50px;top:0;width:10px;height:22px;background:#4cdb7d"></div><div class="a" style="left:60px;top:0;width:878px;height:22px;background:#fafafa"></div><div class="c ctr" style="left:63px;width:134px;">02-02/2-01</div><div class="c ctr clip" style="left:327px;width:160px;">65</div><div class="c clip" style="left:487px;width:116px;letter-spacing:0.308px;">Монтаж панели ...</div><div class="c ctr" style="left:603px;width:69px;">шт</div><div class="c ctr" style="left:672px;width:98px;">0</div><div class="c rgt clip" style="left:770px;width:58px;padding-right:1px">0</div></div><div class="row" style="top:67px;width:938px;height:22px;line-height:24px"><div class="a" style="left:0px;top:0;width:10px;height:22px;background:#14622e"></div><div class="a" style="left:10px;top:0;width:10px;height:22px;background:#19803c"></div><div class="a" style="left:20px;top:0;width:10px;height:22px;background:#1f9c49"></div><div class="a" style="left:30px;top:0;width:10px;height:22px;background:#25b857"></div><div class="a" style="left:40px;top:0;width:10px;height:22px;background:#2dd466"></div><div class="a" style="left:50px;top:0;width:10px;height:22px;background:#4cdb7d"></div><div class="a" style="left:60px;top:0;width:878px;height:22px;background:#fff"></div><div class="c ctr" style="left:63px;width:134px;">02-02/2-01</div><div class="c ctr clip" style="left:327px;width:160px;"></div><div class="c clip" style="left:487px;width:116px;letter-spacing:0.356px;">Прочие работы</div><div class="c ctr" style="left:603px;width:69px;"></div><div class="c ctr" style="left:672px;width:98px;"></div><div class="c rgt clip" style="left:770px;width:58px;padding-right:1px">0</div></div><div class="row" style="top:89px;width:938px;height:22px;line-height:24px"><div class="a" style="left:0px;top:0;width:10px;height:22px;background:#14622e"></div><div class="a" style="left:10px;top:0;width:10px;height:22px;background:#19803c"></div><div class="a" style="left:20px;top:0;width:10px;height:22px;background:#1f9c49"></div><div class="a" style="left:30px;top:0;width:10px;height:22px;background:#25b857"></div><div class="a" style="left:40px;top:0;width:10px;height:22px;background:#2dd466"></div><div class="a" style="left:50px;top:0;width:888px;height:22px;background:#4cdb7d"></div><div class="c ctr wt" style="left:63px;width:134px;">02-02/2-01</div><div class="c wt" style="left:487px;width:116px;letter-spacing:0.361px;">Опора ОП-2п</div><div class="c rgt wt" style="left:770px;width:58px;padding-right:1px">0</div></div><div class="row" style="top:111px;width:938px;height:22px;line-height:24px"><div class="a" style="left:0px;top:0;width:10px;height:22px;background:#14622e"></div><div class="a" style="left:10px;top:0;width:10px;height:22px;background:#19803c"></div><div class="a" style="left:20px;top:0;width:10px;height:22px;background:#1f9c49"></div><div class="a" style="left:30px;top:0;width:10px;height:22px;background:#25b857"></div><div class="a" style="left:40px;top:0;width:10px;height:22px;background:#2dd466"></div><div class="a" style="left:50px;top:0;width:10px;height:22px;background:#4cdb7d"></div><div class="a" style="left:60px;top:0;width:878px;height:22px;background:#fff"></div><div class="c ctr" style="left:63px;width:134px;">02-02/2-01</div><div class="c ctr clip" style="left:327px;width:160px;">71, 72</div><div class="c clip" style="left:487px;width:116px;letter-spacing:0.320px;">Установка окон...</div><div class="c ctr" style="left:603px;width:69px;">м2</div><div class="c ctr" style="left:672px;width:98px;">0</div><div class="c rgt clip" style="left:770px;width:58px;padding-right:1px">0</div></div><div class="row" style="top:133px;width:938px;height:22px;line-height:24px"><div class="a" style="left:0px;top:0;width:10px;height:22px;background:#14622e"></div><div class="a" style="left:10px;top:0;width:10px;height:22px;background:#19803c"></div><div class="a" style="left:20px;top:0;width:10px;height:22px;background:#1f9c49"></div><div class="a" style="left:30px;top:0;width:10px;height:22px;background:#25b857"></div><div class="a" style="left:40px;top:0;width:10px;height:22px;background:#2dd466"></div><div class="a" style="left:50px;top:0;width:10px;height:22px;background:#4cdb7d"></div><div class="a" style="left:60px;top:0;width:878px;height:22px;background:#fafafa"></div><div class="c ctr" style="left:63px;width:134px;">02-02/2-01</div><div class="c ctr clip" style="left:327px;width:160px;letter-spacing:-0.101px;">73, 74, 75, 76, 77, 78, 79, ...</div><div class="c clip" style="left:487px;width:116px;letter-spacing:0.266px;">Устройство пеш...</div><div class="c ctr" style="left:603px;width:69px;">м2</div><div class="c ctr" style="left:672px;width:98px;">50.93</div><div class="c rgt clip" style="left:770px;width:58px;padding-right:1px;letter-spacing:-0.45pxletter-spacing:0.328px;">33 332....</div></div><div class="row" style="top:155px;width:938px;height:22px;line-height:24px"><div class="a" style="left:0px;top:0;width:10px;height:22px;background:#14622e"></div><div class="a" style="left:10px;top:0;width:10px;height:22px;background:#19803c"></div><div class="a" style="left:20px;top:0;width:10px;height:22px;background:#1f9c49"></div><div class="a" style="left:30px;top:0;width:10px;height:22px;background:#25b857"></div><div class="a" style="left:40px;top:0;width:10px;height:22px;background:#2dd466"></div><div class="a" style="left:50px;top:0;width:10px;height:22px;background:#4cdb7d"></div><div class="a" style="left:60px;top:0;width:878px;height:22px;background:#fff"></div><div class="c ctr" style="left:63px;width:134px;">02-02/2-01</div><div class="c ctr clip" style="left:327px;width:160px;">83</div><div class="c clip" style="left:487px;width:116px;letter-spacing:0.318px;">Монтаж сварны...</div><div class="c ctr" style="left:603px;width:69px;">м</div><div class="c ctr" style="left:672px;width:98px;">0</div><div class="c rgt clip" style="left:770px;width:58px;padding-right:1px">0</div></div><div class="row" style="top:177px;width:938px;height:22px;line-height:24px"><div class="a" style="left:0px;top:0;width:10px;height:22px;background:#14622e"></div><div class="a" style="left:10px;top:0;width:10px;height:22px;background:#19803c"></div><div class="a" style="left:20px;top:0;width:10px;height:22px;background:#1f9c49"></div><div class="a" style="left:30px;top:0;width:10px;height:22px;background:#25b857"></div><div class="a" style="left:40px;top:0;width:10px;height:22px;background:#2dd466"></div><div class="a" style="left:50px;top:0;width:10px;height:22px;background:#4cdb7d"></div><div class="a" style="left:60px;top:0;width:878px;height:22px;background:#fafafa"></div><div class="c ctr" style="left:63px;width:134px;">02-02/2-01</div><div class="c ctr clip" style="left:327px;width:160px;">98</div><div class="c clip" style="left:487px;width:116px;letter-spacing:0.308px;">Монтаж панели ...</div><div class="c ctr" style="left:603px;width:69px;">шт</div><div class="c ctr" style="left:672px;width:98px;">0</div><div class="c rgt clip" style="left:770px;width:58px;padding-right:1px">0</div></div><div class="row" style="top:199px;width:938px;height:22px;line-height:24px"><div class="a" style="left:0px;top:0;width:10px;height:22px;background:#14622e"></div><div class="a" style="left:10px;top:0;width:10px;height:22px;background:#19803c"></div><div class="a" style="left:20px;top:0;width:10px;height:22px;background:#1f9c49"></div><div class="a" style="left:30px;top:0;width:10px;height:22px;background:#25b857"></div><div class="a" style="left:40px;top:0;width:10px;height:22px;background:#2dd466"></div><div class="a" style="left:50px;top:0;width:10px;height:22px;background:#4cdb7d"></div><div class="a" style="left:60px;top:0;width:878px;height:22px;background:#fff"></div><div class="c ctr" style="left:63px;width:134px;">02-02/2-01</div><div class="c ctr clip" style="left:327px;width:160px;"></div><div class="c clip" style="left:487px;width:116px;letter-spacing:0.356px;">Прочие работы</div><div class="c ctr" style="left:603px;width:69px;"></div><div class="c ctr" style="left:672px;width:98px;"></div><div class="c rgt clip" style="left:770px;width:58px;padding-right:1px">0</div></div><div class="row" style="top:221px;width:938px;height:22px;line-height:24px"><div class="a" style="left:0px;top:0;width:10px;height:22px;background:#14622e"></div><div class="a" style="left:10px;top:0;width:10px;height:22px;background:#19803c"></div><div class="a" style="left:20px;top:0;width:10px;height:22px;background:#1f9c49"></div><div class="a" style="left:30px;top:0;width:10px;height:22px;background:#25b857"></div><div class="a" style="left:40px;top:0;width:10px;height:22px;background:#2dd466"></div><div class="a" style="left:50px;top:0;width:888px;height:22px;background:#4cdb7d"></div><div class="c ctr wt" style="left:63px;width:134px;">02-02/2-01</div><div class="c wt" style="left:487px;width:116px;letter-spacing:0.361px;">Опора ОП-3п</div><div class="c rgt wt" style="left:770px;width:58px;padding-right:1px">0</div></div><div class="row" style="top:243px;width:938px;height:22px;line-height:24px"><div class="a" style="left:0px;top:0;width:10px;height:22px;background:#14622e"></div><div class="a" style="left:10px;top:0;width:10px;height:22px;background:#19803c"></div><div class="a" style="left:20px;top:0;width:10px;height:22px;background:#1f9c49"></div><div class="a" style="left:30px;top:0;width:10px;height:22px;background:#25b857"></div><div class="a" style="left:40px;top:0;width:10px;height:22px;background:#2dd466"></div><div class="a" style="left:50px;top:0;width:10px;height:22px;background:#4cdb7d"></div><div class="a" style="left:60px;top:0;width:878px;height:22px;background:#fff"></div><div class="c ctr" style="left:63px;width:134px;">02-02/2-01</div><div class="c ctr clip" style="left:327px;width:160px;letter-spacing:0.145px;">99, 100, 106, 107, 108, 1...</div><div class="c clip" style="left:487px;width:116px;letter-spacing:0.266px;">Устройство пеш...</div><div class="c ctr" style="left:603px;width:69px;">м2</div><div class="c ctr" style="left:672px;width:98px;">50.93</div><div class="c rgt clip" style="left:770px;width:58px;padding-right:1px;letter-spacing:-0.45pxletter-spacing:0.328px;">69 441....</div></div><div class="row" style="top:265px;width:938px;height:22px;line-height:24px"><div class="a" style="left:0px;top:0;width:10px;height:22px;background:#14622e"></div><div class="a" style="left:10px;top:0;width:10px;height:22px;background:#19803c"></div><div class="a" style="left:20px;top:0;width:10px;height:22px;background:#1f9c49"></div><div class="a" style="left:30px;top:0;width:10px;height:22px;background:#25b857"></div><div class="a" style="left:40px;top:0;width:10px;height:22px;background:#2dd466"></div><div class="a" style="left:50px;top:0;width:10px;height:22px;background:#4cdb7d"></div><div class="a" style="left:60px;top:0;width:878px;height:22px;background:#fafafa"></div><div class="c ctr" style="left:63px;width:134px;">02-02/2-01</div><div class="c ctr clip" style="left:327px;width:160px;">104, 105</div><div class="c clip" style="left:487px;width:116px;letter-spacing:0.320px;">Установка окон...</div><div class="c ctr" style="left:603px;width:69px;">м2</div><div class="c ctr" style="left:672px;width:98px;">0</div><div class="c rgt clip" style="left:770px;width:58px;padding-right:1px">0</div></div><div class="row" style="top:287px;width:938px;height:22px;line-height:24px"><div class="a" style="left:0px;top:0;width:10px;height:22px;background:#14622e"></div><div class="a" style="left:10px;top:0;width:10px;height:22px;background:#19803c"></div><div class="a" style="left:20px;top:0;width:10px;height:22px;background:#1f9c49"></div><div class="a" style="left:30px;top:0;width:10px;height:22px;background:#25b857"></div><div class="a" style="left:40px;top:0;width:10px;height:22px;background:#2dd466"></div><div class="a" style="left:50px;top:0;width:10px;height:22px;background:#4cdb7d"></div><div class="a" style="left:60px;top:0;width:878px;height:22px;background:#fff"></div><div class="c ctr" style="left:63px;width:134px;">02-02/2-01</div><div class="c ctr clip" style="left:327px;width:160px;">131</div><div class="c clip" style="left:487px;width:116px;letter-spacing:0.308px;">Монтаж панели ...</div><div class="c ctr" style="left:603px;width:69px;">шт</div><div class="c ctr" style="left:672px;width:98px;">0</div><div class="c rgt clip" style="left:770px;width:58px;padding-right:1px">0</div></div><div class="row" style="top:309px;width:938px;height:22px;line-height:24px"><div class="a" style="left:0px;top:0;width:10px;height:22px;background:#14622e"></div><div class="a" style="left:10px;top:0;width:10px;height:22px;background:#19803c"></div><div class="a" style="left:20px;top:0;width:10px;height:22px;background:#1f9c49"></div><div class="a" style="left:30px;top:0;width:10px;height:22px;background:#25b857"></div><div class="a" style="left:40px;top:0;width:10px;height:22px;background:#2dd466"></div><div class="a" style="left:50px;top:0;width:10px;height:22px;background:#4cdb7d"></div><div class="a" style="left:60px;top:0;width:878px;height:22px;background:#fafafa"></div><div class="c ctr" style="left:63px;width:134px;">02-02/2-01</div><div class="c ctr clip" style="left:327px;width:160px;"></div><div class="c clip" style="left:487px;width:116px;letter-spacing:0.356px;">Прочие работы</div><div class="c ctr" style="left:603px;width:69px;"></div><div class="c ctr" style="left:672px;width:98px;"></div><div class="c rgt clip" style="left:770px;width:58px;padding-right:1px">0</div></div></div>
<div class="a" style="left:1910px;top:591px;width:6px;height:316px;background:#f4f4f6"></div>
<div class="a" style="left:1910px;top:725px;width:6px;height:174px;background:#d9d9dd;border-radius:3px"></div>
<div class="a" style="left:971px;top:907px;width:945px;height:3px;background:#f4f4f6"></div>
<div class="a" style="left:971px;top:907px;width:278px;height:3px;background:#dbdbdf;border-radius:0 3px 3px 0"></div>
<svg width="1916" height="910" viewBox="0 0 1916 910"><g class="i" stroke-width="1.9"><path d="M7.5 33.3H30.2M10 33V23.6Q10 22 11.2 21L17.2 16.2Q18.9 14.9 20.6 16.2L26.6 21Q27.8 22 27.8 23.6V33M16 33V29.8a2.9 2.9 0 0 1 5.8 0V33"/><circle cx="18.8" cy="68.9" r="10.6"/><ellipse cx="18.8" cy="68.9" rx="4.6" ry="10.6"/><path d="M18.8 58.3V79.5M9.3 64.6H28.3M9.3 73.2H28.3"/><path d="M8.2 105H20M13.4 112.6H25.4M17.4 120.6H29.6"/><rect x="7.8" y="146.2" width="22" height="21.4" rx="2.5"/><path d="M14 150.6V160.4M18.6 150.6V154.2M25 150.6V157.8"/><path d="M7.6 195.4C11 188 16 188.5 19 191S26 194 30 190.4M8.2 211.6V204.8H14.2V211.6M14.2 211.6V197.8H22.8V211.6M22.8 203H29.4V211.6H8.2"/><path d="M8.9 279.4V300.4M8.9 281.2C14 277 18 279.5 21 281S26.5 282.6 29.4 280.4V294.2C26.5 296.6 24 296.4 21 294.8S14 290.8 8.9 294.6"/><path d="M7.6 322.4H30M7.6 344.2H30M9 327.8L15 338.4M16 327.8L22 338.4M23 327.8L29 338.4"/><rect x="7.8" y="366.4" width="9.4" height="8.8" rx="0.6"/><rect x="7.8" y="379.6" width="9.4" height="8.8" rx="0.6"/><rect x="20.4" y="366.4" width="9.4" height="8.8" rx="0.6"/><rect x="20.4" y="379.6" width="9.4" height="8.8" rx="0.6"/><ellipse cx="19.2" cy="415.6" rx="10.8" ry="4.5"/><path d="M8.4 415.6V431.6C8.4 437.6 30 437.6 30 431.6V415.6M8.4 423.6C8.4 429.6 30 429.6 30 423.6"/><path d="M11.4 455H8V477.8H11.4M27 455H30.4V477.8H27M13.4 472.6L19.2 458.6L25 472.6M15.2 468.4H23.2"/><rect x="8.8" y="501.2" width="20.8" height="20.6" rx="2.4"/><path d="M8.8 507.6H29.6M13 498.8V503M25.6 498.8V503"/><path d="M13.7 512.4H14.7" stroke-width="1.6"/><path d="M13.7 517H14.7" stroke-width="1.6"/><path d="M18.7 512.4H19.7" stroke-width="1.6"/><path d="M18.7 517H19.7" stroke-width="1.6"/><path d="M23.7 512.4H24.7" stroke-width="1.6"/><path d="M23.7 517H24.7" stroke-width="1.6"/><path d="M7.8 554.8C12 546.4 26.4 546.4 30.6 554.8C26.4 563.2 12 563.2 7.8 554.8Z"/><circle cx="19.2" cy="554.8" r="2.6"/><circle cx="18.9" cy="717.8" r="4.2"/><path d="M18.9 706.6V709.4M18.9 726.2V729M7.7 717.8H10.5M27.3 717.8H30.1M11 709.9L13 711.9M24.8 723.7L26.8 725.7M11 725.7L13 723.7M24.8 711.9L26.8 709.9"/><path d="M10 752.4H28.6Q30.8 752.4 30.8 754.6V767.2Q30.8 769.4 28.6 769.4H12L7.8 772.6V754.6Q7.8 752.4 10 752.4ZM11.8 756.8H26.8M11.8 760.8H26.8M11.8 764.8H21.6" stroke-width="1.6"/><path d="M9 811.6C11.6 809 10.6 805 11.4 801.4C12.4 797 15.4 794.2 19 794.2S25.6 797 26.6 801.4C27.4 805 26.4 809 29 811.6ZM15.8 813.2A3.3 3.3 0 0 0 22.2 813.2"/><path d="M7.6 843.2H24M15.8 840.2V843.2M11 843.2C13 849.6 17.4 853.6 22 856M21 843.2C19.4 849.6 14.8 854 9.6 856.6M20.6 860.2L25.4 848.4L30.2 860.2M22.2 856.4H28.6" stroke-width="1.7"/><circle cx="18.9" cy="894.2" r="10.8"/><path d="M18.9 892.6V899.4"/><path d="M18.9 888.6V888.7" stroke-width="2.2"/></g>
<g fill="#1976d2" stroke="#fff" stroke-width="2" stroke-linejoin="round"><rect x="13.4" y="234.8" width="16.8" height="11.4" rx="2"/><rect x="7.6" y="243.6" width="17.4" height="12" rx="2"/></g>
<path d="M918 11.6H932M918 16.2H932M918 20.8H932" stroke="#111" stroke-width="1.7" stroke-linecap="round" fill="none"/>
<path d="M1895.6 13.6V9.2H1899.8M1906.2 9.2H1910.4V13.6M1910.4 18.6V23H1906.2M1899.8 23H1895.6V18.6" stroke="#111" stroke-width="1.6" fill="none" stroke-linecap="round" stroke-linejoin="round"/>
<g class="k"><path d="M652.6999999999999 35.2L667.1 48.8M667.1 35.2L652.6999999999999 48.8"/><path d="M628.6 48.6L642.6 35.4M637.2 35.2H642.8000000000001V40.8M628.4 43.2V48.8H634.0"/><path d="M604.5 48.8H619.3"/><rect x="580.0999999999999" y="39.6" width="12.4" height="8.4" rx="1.4"/><path d="M583.0999999999999 36.4H593.9Q595.5 36.4 595.5 38V45.4"/></g>
<g class="k"><path d="M1282.8 35.2L1297.2 48.8M1297.2 35.2L1282.8 48.8"/><path d="M1258.7 48.6L1272.7 35.4M1267.3 35.2H1272.9V40.8M1258.5 43.2V48.8H1264.1000000000001"/><path d="M1234.6 48.8H1249.4"/><rect x="1210.2" y="39.6" width="12.4" height="8.4" rx="1.4"/><path d="M1213.2 36.4H1224.0Q1225.6000000000001 36.4 1225.6000000000001 38V45.4"/></g>
<g class="k"><path d="M1898.5 35.2L1912.9 48.8M1912.9 35.2L1898.5 48.8"/><path d="M1874.4 48.6L1888.4 35.4M1883.0 35.2H1888.6000000000001V40.8M1874.2 43.2V48.8H1879.8000000000002"/><path d="M1850.3 48.8H1865.1000000000001"/><rect x="1825.9" y="39.6" width="12.4" height="8.4" rx="1.4"/><path d="M1828.9 36.4H1839.7Q1841.3000000000002 36.4 1841.3000000000002 38V45.4"/></g>
<g class="k"><path d="M949.0 479.2L963.4000000000001 492.8M963.4000000000001 479.2L949.0 492.8"/><path d="M924.9000000000001 492.6L938.9000000000001 479.4M933.5000000000001 479.2H939.1000000000001V484.8M924.7 487.2V492.8H930.3000000000001"/><path d="M900.8000000000001 492.8H915.6"/><rect x="876.4" y="483.6" width="12.4" height="8.4" rx="1.4"/><path d="M879.4 480.4H890.2Q891.8000000000001 480.4 891.8000000000001 482V489.4"/></g>
<g class="k"><path d="M1898.5 479.2L1912.9 492.8M1912.9 479.2L1898.5 492.8"/><path d="M1874.4 492.6L1888.4 479.4M1883.0 479.2H1888.6000000000001V484.8M1874.2 487.2V492.8H1879.8000000000002"/><path d="M1850.3 492.8H1865.1000000000001"/><rect x="1825.9" y="483.6" width="12.4" height="8.4" rx="1.4"/><path d="M1828.9 480.4H1839.7Q1841.3000000000002 480.4 1841.3000000000002 482V489.4"/></g>
<g class="i"><path d="M65 66V80M58 73L65 80L72 73M57.4 88H72.6"/><path d="M101.6 65.6H99.6Q97.6 65.6 97.6 67.6V86.4Q97.6 88.4 99.6 88.4H101.6M116.4 65.6H118.4Q120.4 65.6 120.4 67.6V86.4Q120.4 88.4 118.4 88.4H116.4"/><g stroke-width="1"><ellipse cx="109.6" cy="73.4" rx="2.6" ry="1.4"/><path d="M107 73.4V76.4M112.2 73.4V76.4"/><ellipse cx="107" cy="77.4" rx="3" ry="1.5"/><path d="M104 77.4V81.6C104 83.6 110 83.6 110 81.6V77.4M104 79.6C104 81.4 110 81.4 110 79.6"/><ellipse cx="112" cy="78.6" rx="2.8" ry="1.4"/><path d="M114.8 78.6V81.8C114.8 83.6 110.4 83.4 110.2 82.2M114.8 80.4C114.6 81.8 111 82 110.2 81"/></g><g stroke="#b9b9be"><path d="M142.6 77.6L153 88M153 77.6L142.6 88" stroke-width="2"/><path d="M155.8 66H165L161.8 70.4V74.6L159 73.4V70.4Z" stroke-width="1.4"/></g><path d="M192 74.2H202L197 79.2Z" fill="#4a4a4f" stroke="none"/><path d="M697 66V80M690 73L697 80L704 73M689.4 88H704.6"/><path d="M741 80V66M734 73L741 66L748 73M733.4 88H748.6"/><path d="M784.7 69H777.8000000000001Q775.2 69 775.2 71.6V84.2Q775.2 86.8 777.8000000000001 86.8H791.0Q793.6 86.8 793.6 84.2V74.3" stroke-width="2"/><path d="M778.5 78.1L782.6 81.2L792 74.6" stroke-width="1.8"/><path d="M787.9 68.2L790.5 70.2L796 65.4" stroke-width="1.4"/><path d="M830.6 69H821.8000000000001Q819.2 69 819.2 71.6V84.2Q819.2 86.8 821.8000000000001 86.8H835.0Q837.6 86.8 837.6 84.2V74.3" stroke-width="2"/><path d="M822.6 78.1L826.8 81.2L836.2 74.6" stroke-width="1.8"/><path d="M835 65.6L839.8 70.4M839.8 65.6L835 70.4" stroke-width="1.4"/><path d="M863.1999999999999 68.4H884.4"/><path d="M869.4 67.8L870.8 65.4H876.8L878.1999999999999 67.8Z" fill="#4a4a4f" stroke-width="1"/><path d="M866.1999999999999 70.6V85.6Q866.1999999999999 88 868.5999999999999 88H879.0Q881.4 88 881.4 85.6V70.6"/><rect x="905.8" y="69.4" width="20.4" height="19.2" rx="2.6" fill="#4a4a4f" stroke="none"/><path d="M910.8 65.8H927Q929 65.8 929 67.8V82.6" stroke-width="1.5"/><g transform="translate(916.62 76.33) scale(0.62) rotate(-37)" stroke="#fff" stroke-width="1.94"><path d="M2.6 3.2H4.3A3.2 3.2 0 0 0 4.3 -3.2H-4.3A3.2 3.2 0 0 0 -4.3 3.2H-1.2"/><path d="M-9.6 2.2H-11.14A3.2 3.2 0 0 0 -11.14 8.6H-2.54A3.2 3.2 0 0 0 -2.54 2.2H-5.6"/></g><g transform="translate(1323.80 72.70) scale(1.0) rotate(-37)" stroke-width="1.80"><path d="M2.6 3.2H4.3A3.2 3.2 0 0 0 4.3 -3.2H-4.3A3.2 3.2 0 0 0 -4.3 3.2H-1.2"/><path d="M-9.6 2.2H-11.14A3.2 3.2 0 0 0 -11.14 8.6H-2.54A3.2 3.2 0 0 0 -2.54 2.2H-5.6"/></g><path d="M1331.2 81.60000000000001L1334.3 88.2L1337.3999999999999 81.60000000000001" stroke-width="1.5"/><g transform="translate(1367.80 72.70) scale(1.0) rotate(-37)" stroke-width="1.80"><path d="M2.6 3.2H4.3A3.2 3.2 0 0 0 4.3 -3.2H-4.3A3.2 3.2 0 0 0 -4.3 3.2H-1.2"/><path d="M-9.6 2.2H-11.14A3.2 3.2 0 0 0 -11.14 8.6H-2.54A3.2 3.2 0 0 0 -2.54 2.2H-5.6"/></g><circle cx="1377.8" cy="84.8" r="3.5" stroke-width="1.5"/><path d="M1375.5 87.1L1380.1 82.5" stroke-width="1.4"/><g transform="translate(1411.80 72.70) scale(1.0) rotate(-37)" stroke-width="1.80"><path d="M2.6 3.2H4.3A3.2 3.2 0 0 0 4.3 -3.2H-4.3A3.2 3.2 0 0 0 -4.3 3.2H-1.2"/><path d="M-9.6 2.2H-11.14A3.2 3.2 0 0 0 -11.14 8.6H-2.54A3.2 3.2 0 0 0 -2.54 2.2H-5.6"/></g><path d="M1419.2 81.60000000000001L1422.3 88.2L1425.3999999999999 81.60000000000001" stroke-width="1.5"/><text x="1423.3" y="73.6" font-size="11.5" fill="#4a4a4f" stroke="none" text-anchor="middle" style="font-family:'DejaVu Sans',sans-serif">1</text><g transform="translate(1455.80 72.70) scale(1.0) rotate(-37)" stroke-width="1.80"><path d="M2.6 3.2H4.3A3.2 3.2 0 0 0 4.3 -3.2H-4.3A3.2 3.2 0 0 0 -4.3 3.2H-1.2"/><path d="M-9.6 2.2H-11.14A3.2 3.2 0 0 0 -11.14 8.6H-2.54A3.2 3.2 0 0 0 -2.54 2.2H-5.6"/></g><circle cx="1465.8" cy="84.8" r="3.5" stroke-width="1.5"/><path d="M1463.5 87.1L1468.1 82.5" stroke-width="1.4"/><text x="1467.3" y="73.6" font-size="11.5" fill="#4a4a4f" stroke="none" text-anchor="middle" style="font-family:'DejaVu Sans',sans-serif">1</text><ellipse cx="1499.6" cy="73.4" rx="9" ry="3.4"/><path d="M1490.6 73.4V85C1490.6 89.4 1508.6 89.4 1508.6 85V79.6M1490.6 79.2C1490.6 83.6 1508.6 83.6 1508.6 79.2"/><path d="M1510.6 75.4V66.6M1506.8 70.2L1510.6 66.4L1514.2 70.2" stroke-width="1.6"/><path d="M1541 74.2H1551L1546 79.2Z" fill="#4a4a4f" stroke="none"/><path d="M55.4 513H68.2Q70 513 68.9 514.5L64.4 520.6V526.4Q64.4 528.2 62.9 527.3L61.2 526.2V520.6L54.7 514.5Q53.6 513 55.4 513Z" stroke-width="2"/><path d="M71.9 519H76.7M67.7 523.5H76.7M67.7 528H76.7" stroke-width="1.8" stroke-linecap="butt"/><path d="M108.7 513H101.8Q99.2 513 99.2 515.6V528.1999999999999Q99.2 530.8 101.8 530.8H115.0Q117.6 530.8 117.6 528.1999999999999V518.3" stroke-width="2"/><path d="M102.5 522.1L106.6 525.2L116 518.6" stroke-width="1.8"/><path d="M111.9 512.2L114.5 514.2L120 509.4" stroke-width="1.4"/><path d="M154.6 513H145.79999999999998Q143.2 513 143.2 515.6V528.1999999999999Q143.2 530.8 145.79999999999998 530.8H159.0Q161.6 530.8 161.6 528.1999999999999V518.3" stroke-width="2"/><path d="M146.6 522.1L150.8 525.2L160.2 518.6" stroke-width="1.8"/><path d="M159 509.6L163.8 514.4M163.8 509.6L159 514.4" stroke-width="1.4"/><g stroke="#b9b9be"><path d="M186.6 521.6L197 532M197 521.6L186.6 532" stroke-width="2"/><path d="M199.8 510H209L205.8 514.4V518.6L203 517.4V514.4Z" stroke-width="1.4"/></g><path d="M236 531V516M229 523L236 516L243 523"/><path d="M237.8 510.6H244.8M242 514.2H249M245.8 518.2H252.8" stroke-width="1.5"/><path d="M285 524V510M278 517L285 510L292 517M277.4 532H292.6"/><path d="M318.6 512.2H339.4"/><path d="M324.2 511.8L325.8 509H332.2L333.8 511.8Z" fill="#4a4a4f" stroke-width="1"/><path d="M321 514.4H337V530Q337 532.6 334.4 532.6H323.6Q321 532.6 321 530Z" fill="#4a4a4f" stroke-width="1"/><g transform="translate(328.16 521.99) scale(0.56) rotate(-37)" stroke="#fff" stroke-width="1.96"><path d="M2.6 3.2H4.3A3.2 3.2 0 0 0 4.3 -3.2H-4.3A3.2 3.2 0 0 0 -4.3 3.2H-1.2"/><path d="M-9.6 2.2H-11.14A3.2 3.2 0 0 0 -11.14 8.6H-2.54A3.2 3.2 0 0 0 -2.54 2.2H-5.6"/></g><text x="334.6" y="521.4" font-size="6" fill="#fff" stroke="none" text-anchor="middle">1</text><path d="M368 518.2H378L373 523.2Z" fill="#4a4a4f" stroke="none"/><path d="M997 521H980.6M986.4 515L980.4 521L986.4 527"/><path d="M992.8 510.2H1001Q1003.2 510.2 1003.2 512.4V529.6Q1003.2 531.8 1001 531.8H992.8"/><path d="M1027.8 509.4V515.6Q1027.8 517.6 1029.8 517.6H1042.2Q1044.2 517.6 1044.2 515.6V509.4" stroke-width="1.9"/><path d="M1031.2 512H1040.8M1031.2 514.3H1040.8M1031.2 526.6H1040.8M1031.2 528.9H1040.8" stroke-width="1.2"/><path d="M1027.8 532.4V526.4Q1027.8 524.4 1029.8 524.4H1042.2Q1044.2 524.4 1044.2 526.4V532.4" stroke-width="1.9"/><g stroke="#b9b9be"><path d="M1068.6 521.6L1079 532M1079 521.6L1068.6 532" stroke-width="2"/><path d="M1081.8 510H1091L1087.8 514.4V518.6L1085 517.4V514.4Z" stroke-width="1.4"/></g><path d="M1118 531V516M1111 523L1118 516L1125 523"/><path d="M1119.8 510.6H1126.8M1124 514.2H1131M1127.8 518.2H1134.8" stroke-width="1.5"/><path d="M1167 524V510M1160 517L1167 510L1174 517M1159.4 532H1174.6"/><path d="M1207 518.2H1217L1212 523.2Z" fill="#4a4a4f" stroke="none"/></g>
<circle cx="620" cy="77" r="10.8" fill="none" stroke="#1976d2" stroke-width="2"/><text x="619.8" y="82.2" font-size="15" font-weight="bold" fill="#1976d2" text-anchor="middle">₽</text><circle cx="647.4" cy="72.8" r="6.3" fill="none" stroke="#1976d2" stroke-width="1.6"/><circle cx="656.6" cy="81.6" r="6.5" fill="#f0f0f2" stroke="#1976d2" stroke-width="1.6"/><text x="647.4" y="75.2" font-size="7" font-weight="bold" fill="#1976d2" text-anchor="middle">8</text><text x="656.6" y="84.1" font-size="7" font-weight="bold" fill="#1976d2" text-anchor="middle" letter-spacing="-0.3">15</text><circle cx="916" cy="521" r="10.8" fill="none" stroke="#1976d2" stroke-width="2"/><text x="915.8" y="526.2" font-size="15" font-weight="bold" fill="#1976d2" text-anchor="middle">₽</text><circle cx="943.4" cy="516.8" r="6.3" fill="none" stroke="#1976d2" stroke-width="1.6"/><circle cx="952.6" cy="525.6" r="6.5" fill="#f0f0f2" stroke="#1976d2" stroke-width="1.6"/><text x="943.4" y="519.2" font-size="7" font-weight="bold" fill="#1976d2" text-anchor="middle">8</text><text x="952.6" y="528.1" font-size="7" font-weight="bold" fill="#1976d2" text-anchor="middle" letter-spacing="-0.3">15</text><circle cx="1866" cy="521" r="10.8" fill="none" stroke="#1976d2" stroke-width="2"/><text x="1865.8" y="526.2" font-size="15" font-weight="bold" fill="#1976d2" text-anchor="middle">₽</text><circle cx="1893.4" cy="516.8" r="6.3" fill="none" stroke="#1976d2" stroke-width="1.6"/><circle cx="1902.6" cy="525.6" r="6.5" fill="#f0f0f2" stroke="#1976d2" stroke-width="1.6"/><text x="1893.4" y="519.2" font-size="7" font-weight="bold" fill="#1976d2" text-anchor="middle">8</text><text x="1902.6" y="528.1" font-size="7" font-weight="bold" fill="#1976d2" text-anchor="middle" letter-spacing="-0.3">15</text>
<g transform="translate(107 592.4)" fill="none" stroke-linecap="butt"><path d="M0 0.8H12" stroke="#4a4a55" stroke-width="1.6"/><path d="M11.6 1.4L0.2 11.2M3.6 3.4V11.2M0.4 6.2L3.6 3L5.4 4.8" stroke="#55555c" stroke-width="1"/><path d="M6.4 10.8H12" stroke="#9c968a" stroke-width="1.4"/></g><g transform="translate(232 615.7)" fill="#5c5c60" stroke="none"><circle cx="6.5" cy="1.5" r="1.35"/><path d="M0.9 5.2L4.6 2.6Q5.6 2.2 6.2 3.2L8.2 7L7.2 7.8L5.2 5.6L3.6 6.8L5 8.6L4.6 11.6H3.4L3.6 9.2L2.4 8L1.2 11.8H0L1.4 6.6Z"/><path d="M6.2 11.8L9.4 7L12.4 11.8Z"/></g><g transform="translate(232 639.7)" fill="#5c5c60" stroke="none"><circle cx="6.5" cy="1.5" r="1.35"/><path d="M0.9 5.2L4.6 2.6Q5.6 2.2 6.2 3.2L8.2 7L7.2 7.8L5.2 5.6L3.6 6.8L5 8.6L4.6 11.6H3.4L3.6 9.2L2.4 8L1.2 11.8H0L1.4 6.6Z"/><path d="M6.2 11.8L9.4 7L12.4 11.8Z"/></g><g transform="translate(107 664.4)" fill="none" stroke-linecap="butt"><path d="M0 0.8H12" stroke="#4a4a55" stroke-width="1.6"/><path d="M11.6 1.4L0.2 11.2M3.6 3.4V11.2M0.4 6.2L3.6 3L5.4 4.8" stroke="#55555c" stroke-width="1"/><path d="M6.4 10.8H12" stroke="#9c968a" stroke-width="1.4"/></g><g transform="translate(107 688.4)" fill="none" stroke-linecap="butt"><path d="M0 0.8H12" stroke="#4a4a55" stroke-width="1.6"/><path d="M11.6 1.4L0.2 11.2M3.6 3.4V11.2M0.4 6.2L3.6 3L5.4 4.8" stroke="#55555c" stroke-width="1"/><path d="M6.4 10.8H12" stroke="#9c968a" stroke-width="1.4"/></g><g class="i" stroke="#5a5a60"><g transform="translate(111.90 716.05) scale(0.5) rotate(-37)" stroke-width="2.20"><path d="M2.6 3.2H4.3A3.2 3.2 0 0 0 4.3 -3.2H-4.3A3.2 3.2 0 0 0 -4.3 3.2H-1.2"/><path d="M-9.6 2.2H-11.14A3.2 3.2 0 0 0 -11.14 8.6H-2.54A3.2 3.2 0 0 0 -2.54 2.2H-5.6"/></g></g><text x="117.6" y="716" font-size="5.5" fill="#5a5a60" text-anchor="middle" style="font-family:'DejaVu Sans',sans-serif">1</text><circle cx="131.1" cy="717.7" r="5.3" fill="none" stroke="#5a5a60" stroke-width="1"/><path d="M128.9 715.5L131.1 720.3000000000001L133.29999999999998 715.5" fill="none" stroke="#5a5a60" stroke-width="1"/><g transform="translate(232 711.7)" fill="#5c5c60" stroke="none"><circle cx="6.5" cy="1.5" r="1.35"/><path d="M0.9 5.2L4.6 2.6Q5.6 2.2 6.2 3.2L8.2 7L7.2 7.8L5.2 5.6L3.6 6.8L5 8.6L4.6 11.6H3.4L3.6 9.2L2.4 8L1.2 11.8H0L1.4 6.6Z"/><path d="M6.2 11.8L9.4 7L12.4 11.8Z"/></g><g transform="translate(232 735.7)" fill="#5c5c60" stroke="none"><circle cx="6.5" cy="1.5" r="1.35"/><path d="M0.9 5.2L4.6 2.6Q5.6 2.2 6.2 3.2L8.2 7L7.2 7.8L5.2 5.6L3.6 6.8L5 8.6L4.6 11.6H3.4L3.6 9.2L2.4 8L1.2 11.8H0L1.4 6.6Z"/><path d="M6.2 11.8L9.4 7L12.4 11.8Z"/></g><g transform="translate(232 783.7)" fill="#5c5c60" stroke="none"><circle cx="6.5" cy="1.5" r="1.35"/><path d="M0.9 5.2L4.6 2.6Q5.6 2.2 6.2 3.2L8.2 7L7.2 7.8L5.2 5.6L3.6 6.8L5 8.6L4.6 11.6H3.4L3.6 9.2L2.4 8L1.2 11.8H0L1.4 6.6Z"/><path d="M6.2 11.8L9.4 7L12.4 11.8Z"/></g><g transform="translate(107 808.4)" fill="none" stroke-linecap="butt"><path d="M0 0.8H12" stroke="#4a4a55" stroke-width="1.6"/><path d="M11.6 1.4L0.2 11.2M3.6 3.4V11.2M0.4 6.2L3.6 3L5.4 4.8" stroke="#55555c" stroke-width="1"/><path d="M6.4 10.8H12" stroke="#9c968a" stroke-width="1.4"/></g><g class="i" stroke="#5a5a60"><g transform="translate(111.90 836.05) scale(0.5) rotate(-37)" stroke-width="2.20"><path d="M2.6 3.2H4.3A3.2 3.2 0 0 0 4.3 -3.2H-4.3A3.2 3.2 0 0 0 -4.3 3.2H-1.2"/><path d="M-9.6 2.2H-11.14A3.2 3.2 0 0 0 -11.14 8.6H-2.54A3.2 3.2 0 0 0 -2.54 2.2H-5.6"/></g></g><text x="117.6" y="836" font-size="5.5" fill="#5a5a60" text-anchor="middle" style="font-family:'DejaVu Sans',sans-serif">1</text><circle cx="131.1" cy="837.7" r="5.3" fill="none" stroke="#5a5a60" stroke-width="1"/><path d="M127.5 841.3000000000001L134.7 834.1" fill="none" stroke="#5a5a60" stroke-width="1"/><g transform="translate(232 831.7)" fill="#5c5c60" stroke="none"><circle cx="6.5" cy="1.5" r="1.35"/><path d="M0.9 5.2L4.6 2.6Q5.6 2.2 6.2 3.2L8.2 7L7.2 7.8L5.2 5.6L3.6 6.8L5 8.6L4.6 11.6H3.4L3.6 9.2L2.4 8L1.2 11.8H0L1.4 6.6Z"/><path d="M6.2 11.8L9.4 7L12.4 11.8Z"/></g><g class="i" stroke="#5a5a60"><g transform="translate(111.90 860.05) scale(0.5) rotate(-37)" stroke-width="2.20"><path d="M2.6 3.2H4.3A3.2 3.2 0 0 0 4.3 -3.2H-4.3A3.2 3.2 0 0 0 -4.3 3.2H-1.2"/><path d="M-9.6 2.2H-11.14A3.2 3.2 0 0 0 -11.14 8.6H-2.54A3.2 3.2 0 0 0 -2.54 2.2H-5.6"/></g></g><text x="117.6" y="860" font-size="5.5" fill="#5a5a60" text-anchor="middle" style="font-family:'DejaVu Sans',sans-serif">1</text><circle cx="131.1" cy="861.7" r="5.3" fill="none" stroke="#5a5a60" stroke-width="1"/><path d="M127.5 865.3000000000001L134.7 858.1" fill="none" stroke="#5a5a60" stroke-width="1"/><g transform="translate(232 855.7)" fill="#5c5c60" stroke="none"><circle cx="6.5" cy="1.5" r="1.35"/><path d="M0.9 5.2L4.6 2.6Q5.6 2.2 6.2 3.2L8.2 7L7.2 7.8L5.2 5.6L3.6 6.8L5 8.6L4.6 11.6H3.4L3.6 9.2L2.4 8L1.2 11.8H0L1.4 6.6Z"/><path d="M6.2 11.8L9.4 7L12.4 11.8Z"/></g><g transform="translate(107 880.4)" fill="none" stroke-linecap="butt"><path d="M0 0.8H12" stroke="#4a4a55" stroke-width="1.6"/><path d="M11.6 1.4L0.2 11.2M3.6 3.4V11.2M0.4 6.2L3.6 3L5.4 4.8" stroke="#55555c" stroke-width="1"/><path d="M6.4 10.8H12" stroke="#9c968a" stroke-width="1.4"/></g>
<path d="M1416.4 175L1416.4 110.2" stroke="#000" stroke-width="2.9" fill="none"/><path d="M1416.4 99.4L1422.2 110.2L1410.6 110.2Z" fill="#000"/><path d="M1462.4 175L1462.4 110.2" stroke="#000" stroke-width="2.9" fill="none"/><path d="M1462.4 99.4L1468.2 110.2L1456.6 110.2Z" fill="#000"/><ellipse cx="1417.4" cy="183.9" rx="15.3" ry="17.2" fill="#fff" stroke="#000" stroke-width="3"/><text x="1417.4" y="190.9" font-size="19.5" text-anchor="middle" fill="#000">1</text><ellipse cx="1463.9" cy="183.9" rx="15.3" ry="17.2" fill="#fff" stroke="#000" stroke-width="3"/><text x="1463.9" y="190.9" font-size="19.5" text-anchor="middle" fill="#000">2</text><path d="M113.6 620L113.6 697.4" stroke="#000" stroke-width="2.9" fill="none"/><path d="M113.6 708.6L107.9 697.4L119.3 697.4Z" fill="#000"/><ellipse cx="112.9" cy="612.7" rx="15.3" ry="17.2" fill="#fff" stroke="#000" stroke-width="3"/><text x="112.9" y="619.7" font-size="19.5" text-anchor="middle" fill="#000">3</text><path d="M210 719.4L152.6 719.4" stroke="#000" stroke-width="2.9" fill="none"/><path d="M141.1 719.4L152.6 713.8L152.6 725.0Z" fill="#000"/><ellipse cx="221.1" cy="719.2" rx="15.3" ry="17.2" fill="#fff" stroke="#000" stroke-width="3"/><text x="221.1" y="726.2" font-size="19.5" text-anchor="middle" fill="#000">4</text><path d="M210 837.1L152.6 837.1" stroke="#000" stroke-width="2.9" fill="none"/><path d="M141.1 837.1L152.6 831.5L152.6 842.7Z" fill="#000"/><ellipse cx="221.1" cy="837.1" rx="15.3" ry="17.2" fill="#fff" stroke="#000" stroke-width="3"/><text x="221.1" y="844.1" font-size="19.5" text-anchor="middle" fill="#000">5</text></svg>
</body></html>
